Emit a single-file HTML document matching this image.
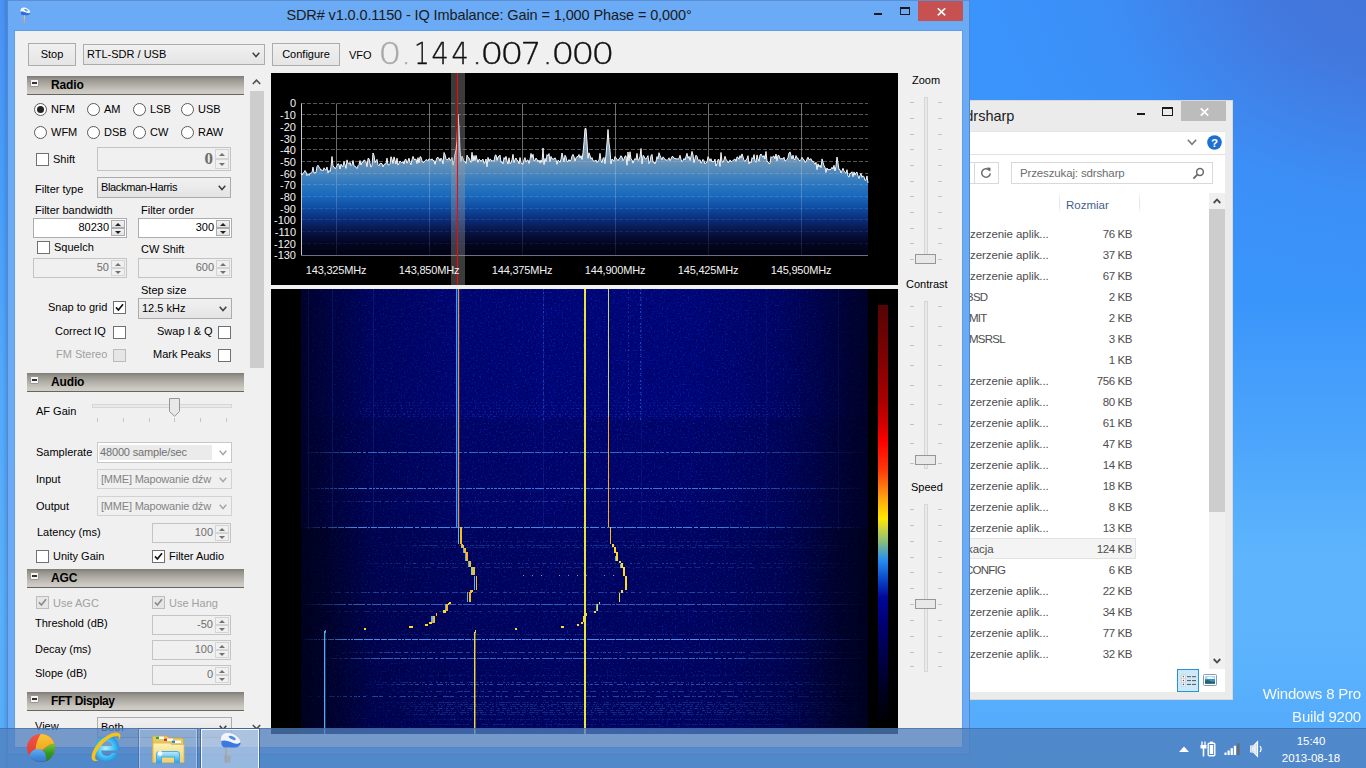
<!DOCTYPE html><html><head><meta charset="utf-8"><title>SDR#</title><style>
*{box-sizing:border-box;margin:0;padding:0}
html,body{width:1366px;height:768px;overflow:hidden}
body{position:relative;font-family:"Liberation Sans",sans-serif;font-size:11px;color:#000;
 background:
  radial-gradient(ellipse 430px 340px at 1400px -40px, rgba(68,114,214,1) 0%, rgba(67,117,219,.85) 35%, rgba(62,132,238,.35) 70%, rgba(58,150,252,0) 100%),
  linear-gradient(180deg,#3a94fb 0px,#3a95fb 300px,#4ba4fb 430px,#5eb5fd 560px,#5db4fd 640px,#57aefc 700px,#55abfc 728px,#52a6f6 768px);}
div{position:absolute}
.t{white-space:nowrap;line-height:13px;height:13px}
.g{color:#6d6d6d}
.hdr{background:linear-gradient(180deg,#7e7b76 0px,#96938d 3px,#b2afa8 9px,#cbc8c1 15px,#d0cdc6 18px);border-bottom:1px solid #676562}
.hdr b{position:absolute;left:24px;top:2px;font-size:12px;line-height:14px}
.hdr i{position:absolute;left:3px;top:3px;width:9px;height:8px;background:#f4f4f2;border:1px solid #9a9893;border-radius:1px}
.hdr i:after{content:"";position:absolute;left:1px;top:2px;width:5px;height:2px;background:#333}
.cb{width:13px;height:13px;background:#fff;border:1px solid #707070}
.cb.d{background:#e6e6e6;border-color:#bcbcbc}
.rb{width:13px;height:13px;background:#fff;border:1px solid #5a5a5a;border-radius:50%}
.rb.on:after{content:"";position:absolute;left:2px;top:2px;width:7px;height:7px;border-radius:50%;background:#222}
.btn{background:linear-gradient(180deg,#f0f0f0,#e5e5e5);border:1px solid #acacac;text-align:center;font-size:11px;line-height:20px}
.cmb{background:linear-gradient(180deg,#f1f1f1,#e4e4e4);border:1px solid #acacac;font-size:11px;line-height:19px;padding-left:3px;white-space:nowrap;overflow:hidden}
.cmb.d{background:#f0f0f0;border-color:#d2d2d2;color:#6d6d6d}
.num{background:#fff;border:1px solid #abadb3;font-size:11px;line-height:17px;text-align:right;padding-right:17px;white-space:nowrap}
.num.d{background:#f0f0f0;border-color:#c4c4c4;color:#6d6d6d}
svg{position:absolute;overflow:visible}
</style></head><body>
<div style="left:0px;top:0px;width:8px;height:768px;background:linear-gradient(90deg,rgba(0,20,90,0) 0px,rgba(0,20,90,.02) 3px,rgba(0,20,90,.14) 7px),linear-gradient(180deg,#4a92f5 0px,#489ff9 200px,#55aafc 400px,#5ab0fc 600px,#58adfb 768px)"></div>
<div style="left:940px;top:100px;width:293px;height:600px;background:#ebebeb;border:1px solid #d9d9d9"></div>
<div class="t" style="left:958px;top:107px;font-size:14.5px;line-height:18px;height:18px;color:#1c1c1c">sdrsharp</div>
<div style="left:1137px;top:113px;width:8px;height:2px;background:#1a1a1a"></div>
<div style="left:1162px;top:107px;width:11px;height:9px;border:1px solid #1a1a1a;border-top-width:2px"></div>
<div style="left:1181px;top:101px;width:45px;height:20px;background:#bcbcbc"></div>
<svg style="left:1200px;top:108px" width="9" height="8" viewBox="0 0 9 8"><path d="M0.8 0.3 L8.2 7.7 M8.2 0.3 L0.8 7.7" stroke="#fff" stroke-width="1.7" fill="none"/></svg>
<div style="left:940px;top:131px;width:285px;height:561px;background:#fff"></div>
<div style="left:940px;top:154px;width:285px;height:1px;background:#e1e1e1"></div>
<div style="left:940px;top:131px;width:285px;height:1px;background:#e6e6e6"></div>
<svg style="left:1187px;top:139px" width="10" height="7" viewBox="0 0 10 7"><path d="M0.8 0.8 L5 5.4 L9.2 0.8" stroke="#7a7a7a" stroke-width="1.6" fill="none"/></svg>
<svg style="left:1206.5px;top:134.5px" width="15" height="15" viewBox="0 0 15 15"><circle cx="7.5" cy="7.5" r="7.3" fill="#1e6fd0"/><text x="7.5" y="11.6" text-anchor="middle" font-family="Liberation Sans,sans-serif" font-weight="bold" font-size="11.5" fill="#fff">?</text></svg>
<div style="left:960px;top:162px;width:39px;height:22px;background:#fff;border:1px solid #d9d9d9"></div>
<div style="left:960px;top:162px;width:15px;height:22px;background:#fff;border:1px solid #d9d9d9"></div>
<svg style="left:980px;top:167px" width="12" height="12" viewBox="0 0 12 12"><path d="M9.6 3.6 A4.3 4.3 0 1 0 10.3 6.4" stroke="#6a6a6a" stroke-width="1.4" fill="none"/><path d="M6.6 0.6 L10.6 0.8 L10.2 4.8 Z" fill="#6a6a6a"/></svg>
<div style="left:1011px;top:162px;width:202px;height:22px;background:#fff;border:1px solid #d9d9d9"></div>
<div class="t" style="left:1020px;top:166px;font-size:11.5px;line-height:14px;height:14px;color:#6d6d6d;letter-spacing:-0.14px">Przeszukaj: sdrsharp</div>
<svg style="left:1192px;top:167px" width="13" height="13" viewBox="0 0 13 13"><circle cx="8" cy="5" r="3.4" stroke="#6a6a6a" stroke-width="1.5" fill="none"/><path d="M5.6 7.4 L1.4 11.6" stroke="#6a6a6a" stroke-width="1.9"/></svg>
<div style="left:1059px;top:192px;width:1px;height:21px;background:linear-gradient(180deg,#fff,#dfe8f5 40%,#dfe8f5 70%,#fff)"></div>
<div style="left:1139px;top:192px;width:1px;height:21px;background:linear-gradient(180deg,#fff,#dfe8f5 40%,#dfe8f5 70%,#fff)"></div>
<div class="t" style="left:1066px;top:198px;font-size:11.5px;line-height:14px;height:14px;color:#44608c">Rozmiar</div>
<div style="left:1209px;top:193px;width:16px;height:476px;background:#f0f0f0"></div>
<div style="left:1209px;top:209px;width:16px;height:303px;background:#cdcdcd"></div>
<svg style="left:1213px;top:198px" width="8" height="6" viewBox="0 0 10 7"><path d="M0.9 6 L5 1.6 L9.1 6" stroke="#4a4a4a" stroke-width="2.3" fill="none"/></svg>
<svg style="left:1213px;top:658px" width="8" height="6" viewBox="0 0 10 7"><path d="M0.9 1.0 L5 5.4 L9.1 1.0" stroke="#4a4a4a" stroke-width="2.3" fill="none"/></svg>
<div class="t" style="left:970px;top:227px;font-size:11.5px;line-height:14px;height:14px;color:#4e4e4e;letter-spacing:-0.07px;">zerzenie aplik...</div>
<div class="t" style="left:1032px;top:227px;font-size:11.5px;line-height:14px;height:14px;color:#4e4e4e;letter-spacing:-0.07px;width:100px;text-align:right;letter-spacing:-0.4px">76 KB</div>
<div class="t" style="left:970px;top:248px;font-size:11.5px;line-height:14px;height:14px;color:#4e4e4e;letter-spacing:-0.07px;">zerzenie aplik...</div>
<div class="t" style="left:1032px;top:248px;font-size:11.5px;line-height:14px;height:14px;color:#4e4e4e;letter-spacing:-0.07px;width:100px;text-align:right;letter-spacing:-0.4px">37 KB</div>
<div class="t" style="left:970px;top:269px;font-size:11.5px;line-height:14px;height:14px;color:#4e4e4e;letter-spacing:-0.07px;">zerzenie aplik...</div>
<div class="t" style="left:1032px;top:269px;font-size:11.5px;line-height:14px;height:14px;color:#4e4e4e;letter-spacing:-0.07px;width:100px;text-align:right;letter-spacing:-0.4px">67 KB</div>
<div class="t" style="left:966px;top:290px;font-size:11.5px;line-height:14px;height:14px;color:#4e4e4e;letter-spacing:-0.07px;letter-spacing:-0.75px;">BSD</div>
<div class="t" style="left:1032px;top:290px;font-size:11.5px;line-height:14px;height:14px;color:#4e4e4e;letter-spacing:-0.07px;width:100px;text-align:right;letter-spacing:-0.4px">2 KB</div>
<div class="t" style="left:969px;top:311px;font-size:11.5px;line-height:14px;height:14px;color:#4e4e4e;letter-spacing:-0.07px;letter-spacing:-0.75px;">MIT</div>
<div class="t" style="left:1032px;top:311px;font-size:11.5px;line-height:14px;height:14px;color:#4e4e4e;letter-spacing:-0.07px;width:100px;text-align:right;letter-spacing:-0.4px">2 KB</div>
<div class="t" style="left:969px;top:332px;font-size:11.5px;line-height:14px;height:14px;color:#4e4e4e;letter-spacing:-0.07px;letter-spacing:-0.75px;">MSRSL</div>
<div class="t" style="left:1032px;top:332px;font-size:11.5px;line-height:14px;height:14px;color:#4e4e4e;letter-spacing:-0.07px;width:100px;text-align:right;letter-spacing:-0.4px">3 KB</div>
<div class="t" style="left:1032px;top:353px;font-size:11.5px;line-height:14px;height:14px;color:#4e4e4e;letter-spacing:-0.07px;width:100px;text-align:right;letter-spacing:-0.4px">1 KB</div>
<div class="t" style="left:970px;top:374px;font-size:11.5px;line-height:14px;height:14px;color:#4e4e4e;letter-spacing:-0.07px;">zerzenie aplik...</div>
<div class="t" style="left:1032px;top:374px;font-size:11.5px;line-height:14px;height:14px;color:#4e4e4e;letter-spacing:-0.07px;width:100px;text-align:right;letter-spacing:-0.4px">756 KB</div>
<div class="t" style="left:970px;top:395px;font-size:11.5px;line-height:14px;height:14px;color:#4e4e4e;letter-spacing:-0.07px;">zerzenie aplik...</div>
<div class="t" style="left:1032px;top:395px;font-size:11.5px;line-height:14px;height:14px;color:#4e4e4e;letter-spacing:-0.07px;width:100px;text-align:right;letter-spacing:-0.4px">80 KB</div>
<div class="t" style="left:970px;top:416px;font-size:11.5px;line-height:14px;height:14px;color:#4e4e4e;letter-spacing:-0.07px;">zerzenie aplik...</div>
<div class="t" style="left:1032px;top:416px;font-size:11.5px;line-height:14px;height:14px;color:#4e4e4e;letter-spacing:-0.07px;width:100px;text-align:right;letter-spacing:-0.4px">61 KB</div>
<div class="t" style="left:970px;top:437px;font-size:11.5px;line-height:14px;height:14px;color:#4e4e4e;letter-spacing:-0.07px;">zerzenie aplik...</div>
<div class="t" style="left:1032px;top:437px;font-size:11.5px;line-height:14px;height:14px;color:#4e4e4e;letter-spacing:-0.07px;width:100px;text-align:right;letter-spacing:-0.4px">47 KB</div>
<div class="t" style="left:970px;top:458px;font-size:11.5px;line-height:14px;height:14px;color:#4e4e4e;letter-spacing:-0.07px;">zerzenie aplik...</div>
<div class="t" style="left:1032px;top:458px;font-size:11.5px;line-height:14px;height:14px;color:#4e4e4e;letter-spacing:-0.07px;width:100px;text-align:right;letter-spacing:-0.4px">14 KB</div>
<div class="t" style="left:970px;top:479px;font-size:11.5px;line-height:14px;height:14px;color:#4e4e4e;letter-spacing:-0.07px;">zerzenie aplik...</div>
<div class="t" style="left:1032px;top:479px;font-size:11.5px;line-height:14px;height:14px;color:#4e4e4e;letter-spacing:-0.07px;width:100px;text-align:right;letter-spacing:-0.4px">18 KB</div>
<div class="t" style="left:970px;top:500px;font-size:11.5px;line-height:14px;height:14px;color:#4e4e4e;letter-spacing:-0.07px;">zerzenie aplik...</div>
<div class="t" style="left:1032px;top:500px;font-size:11.5px;line-height:14px;height:14px;color:#4e4e4e;letter-spacing:-0.07px;width:100px;text-align:right;letter-spacing:-0.4px">8 KB</div>
<div class="t" style="left:970px;top:521px;font-size:11.5px;line-height:14px;height:14px;color:#4e4e4e;letter-spacing:-0.07px;">zerzenie aplik...</div>
<div class="t" style="left:1032px;top:521px;font-size:11.5px;line-height:14px;height:14px;color:#4e4e4e;letter-spacing:-0.07px;width:100px;text-align:right;letter-spacing:-0.4px">13 KB</div>
<div style="left:940px;top:538px;width:196px;height:21px;background:#f4f4f4;border:1px solid #e2e2e2"></div>
<div class="t" style="left:967px;top:542px;font-size:11.5px;line-height:14px;height:14px;color:#4e4e4e;letter-spacing:-0.07px;">kacja</div>
<div class="t" style="left:1032px;top:542px;font-size:11.5px;line-height:14px;height:14px;color:#4e4e4e;letter-spacing:-0.07px;width:100px;text-align:right;letter-spacing:-0.4px">124 KB</div>
<div class="t" style="left:965px;top:563px;font-size:11.5px;line-height:14px;height:14px;color:#4e4e4e;letter-spacing:-0.07px;letter-spacing:-0.75px;">CONFIG</div>
<div class="t" style="left:1032px;top:563px;font-size:11.5px;line-height:14px;height:14px;color:#4e4e4e;letter-spacing:-0.07px;width:100px;text-align:right;letter-spacing:-0.4px">6 KB</div>
<div class="t" style="left:970px;top:584px;font-size:11.5px;line-height:14px;height:14px;color:#4e4e4e;letter-spacing:-0.07px;">zerzenie aplik...</div>
<div class="t" style="left:1032px;top:584px;font-size:11.5px;line-height:14px;height:14px;color:#4e4e4e;letter-spacing:-0.07px;width:100px;text-align:right;letter-spacing:-0.4px">22 KB</div>
<div class="t" style="left:970px;top:605px;font-size:11.5px;line-height:14px;height:14px;color:#4e4e4e;letter-spacing:-0.07px;">zerzenie aplik...</div>
<div class="t" style="left:1032px;top:605px;font-size:11.5px;line-height:14px;height:14px;color:#4e4e4e;letter-spacing:-0.07px;width:100px;text-align:right;letter-spacing:-0.4px">34 KB</div>
<div class="t" style="left:970px;top:626px;font-size:11.5px;line-height:14px;height:14px;color:#4e4e4e;letter-spacing:-0.07px;">zerzenie aplik...</div>
<div class="t" style="left:1032px;top:626px;font-size:11.5px;line-height:14px;height:14px;color:#4e4e4e;letter-spacing:-0.07px;width:100px;text-align:right;letter-spacing:-0.4px">77 KB</div>
<div class="t" style="left:970px;top:647px;font-size:11.5px;line-height:14px;height:14px;color:#4e4e4e;letter-spacing:-0.07px;">zerzenie aplik...</div>
<div class="t" style="left:1032px;top:647px;font-size:11.5px;line-height:14px;height:14px;color:#4e4e4e;letter-spacing:-0.07px;width:100px;text-align:right;letter-spacing:-0.4px">32 KB</div>
<div style="left:1177px;top:669px;width:22px;height:23px;background:#cde8f7;border:1px solid #2693da"></div>
<svg style="left:1177px;top:669px" width="22" height="23" viewBox="0 0 22 23"><rect x="4.4" y="5.7" width="4" height="3.8" rx=".8" fill="#fff" stroke="#b8c0c8" stroke-width=".6"/><circle cx="6.4" cy="7.6" r=".8" fill="#2a9a30"/><rect x="10" y="7.1" width="4" height="1.1" fill="#606468"/><rect x="15" y="7.1" width="4" height="1.1" fill="#606468"/><rect x="4.4" y="9.6" width="4" height="3.8" rx=".8" fill="#fff" stroke="#b8c0c8" stroke-width=".6"/><circle cx="6.4" cy="11.5" r=".8" fill="#e82818"/><rect x="10" y="11.0" width="4" height="1.1" fill="#606468"/><rect x="15" y="11.0" width="4" height="1.1" fill="#606468"/><rect x="4.4" y="13.5" width="4" height="3.8" rx=".8" fill="#fff" stroke="#b8c0c8" stroke-width=".6"/><circle cx="6.4" cy="15.4" r=".8" fill="#2a5ae0"/><rect x="10" y="14.9" width="4" height="1.1" fill="#606468"/><rect x="15" y="14.9" width="4" height="1.1" fill="#606468"/></svg>
<svg style="left:1203px;top:674px" width="14" height="12" viewBox="0 0 14 12"><rect x="0.5" y="0.5" width="13" height="11" rx="1" fill="#fff" stroke="#8a98b0"/><rect x="2" y="2" width="10" height="7.6" fill="#3a8ad8"/><rect x="2" y="2" width="10" height="3" fill="#a8d8f8"/><path d="M4 3.5 Q7 2 11 4 L11 5 L5 5 Z" fill="#fff" fill-opacity=".85"/><path d="M2 9.6 L2 6.5 Q5 5 8 7.5 Q10 8.2 12 7.2 L12 9.6 Z" fill="#2a6a3a"/><path d="M2 9.6 L2 8.6 Q6 8 12 9 L12 9.6 Z" fill="#1a58a8"/></svg>
<div style="left:7px;top:0px;width:963px;height:755px;background:#6babf5;border:1px solid #5288cc;border-top-color:#5a8fd2"></div>
<div style="left:15px;top:31px;width:947px;height:716px;background:#f0f0f0"></div>
<div style="left:14px;top:30px;width:949px;height:718px;border:1px solid #5f9ce6"></div>
<div class="t" style="left:8px;top:6px;width:962px;text-align:center;font-size:14.5px;line-height:18px;height:18px;color:#1a1a1a;letter-spacing:-0.11px">SDR# v1.0.0.1150 - IQ Imbalance: Gain = 1,000 Phase = 0,000°</div>
<svg style="left:20px;top:7px" width="11" height="16.5" viewBox="0 0 22 31" preserveAspectRatio="none"><path d="M1 7 C1 2 5 0.5 9 1 C14 1.6 19 5 20.5 9.5 C21 12 19 14.5 15 14.5 L7 14.5 C3 14.5 1 12 1 7 Z" fill="#f4f7fc"/><path d="M8.5 4.5 C10 3 13.5 4 15.5 6.5 C16.3 7.8 15 8.6 13.5 8 C11.5 7 9.5 6.6 8.5 4.5 Z" fill="#5a96ea"/><path d="M1.2 9 C4 7.5 9 9 13 11 C16 12.3 19 12 20.6 10 C21 13 18.5 15.5 14.5 15.5 L5.5 15.5 C2.5 15.5 1.2 13 1.2 9 Z" fill="#2f6fdc"/><rect x="4.4" y="15.5" width="2" height="14" fill="#a8acb2"/><rect x="8" y="15.5" width="2" height="14" fill="#c0c4ca"/><path d="M3.6 23 H10.6 V30 H3.6 Z" fill="#a0a4aa" fill-opacity=".6"/></svg>
<div style="left:874px;top:13px;width:8px;height:2px;background:#1a1a1a"></div>
<div style="left:900px;top:7px;width:10px;height:8px;border:1px solid #1a1a1a;border-top-width:2px"></div>
<div style="left:918px;top:1px;width:45px;height:20px;background:#c75050"></div>
<svg style="left:937px;top:8px" width="9" height="7.6" viewBox="0 0 9 8" preserveAspectRatio="none"><path d="M0.8 0.3 L8.2 7.7 M8.2 0.3 L0.8 7.7" stroke="#fff" stroke-width="1.7" fill="none"/></svg>
<div class="btn" style="left:28px;top:43px;width:48px;height:23px;">Stop</div>
<div class="cmb" style="left:83px;top:44px;width:182px;height:21px;">RTL-SDR / USB</div>
<div class="btn" style="left:272px;top:43px;width:68px;height:23px;">Configure</div>
<div class="t" style="left:349px;top:49px;">VFO</div>
<svg style="left:252px;top:52px" width="8" height="6" viewBox="0 0 8 6"><path d="M0.7 0.8 L4 4.6 L7.3 0.8" stroke="#404040" stroke-width="1.5" fill="none"/></svg>
<div class="t" style="left:379px;top:35px;width:240px;font-family:'DejaVu Sans Light','DejaVu Sans',sans-serif;font-weight:200;font-size:30px;line-height:38px;height:38px;-webkit-text-stroke:0.35px currentColor"><span style="position:absolute;left:-4.1px;top:0;width:30px;text-align:center;color:#a8a8a8;transform:scaleX(1.22)">0</span><span style="position:absolute;left:12.0px;top:0;width:30px;text-align:center;color:#a8a8a8;transform:scaleX(1.0)">.</span><span style="position:absolute;left:28.3px;top:0;width:30px;text-align:center;color:#111;transform:scaleX(0.8)">1</span><span style="position:absolute;left:46.2px;top:0;width:30px;text-align:center;color:#111;transform:scaleX(0.9)">4</span><span style="position:absolute;left:66.4px;top:0;width:30px;text-align:center;color:#111;transform:scaleX(0.9)">4</span><span style="position:absolute;left:83.1px;top:0;width:30px;text-align:center;color:#111;transform:scaleX(1.0)">.</span><span style="position:absolute;left:97.7px;top:0;width:30px;text-align:center;color:#111;transform:scaleX(1.22)">0</span><span style="position:absolute;left:117.6px;top:0;width:30px;text-align:center;color:#111;transform:scaleX(1.22)">0</span><span style="position:absolute;left:136.6px;top:0;width:30px;text-align:center;color:#111;transform:scaleX(1.1)">7</span><span style="position:absolute;left:153.5px;top:0;width:30px;text-align:center;color:#111;transform:scaleX(1.0)">.</span><span style="position:absolute;left:169.1px;top:0;width:30px;text-align:center;color:#111;transform:scaleX(1.22)">0</span><span style="position:absolute;left:188.9px;top:0;width:30px;text-align:center;color:#111;transform:scaleX(1.22)">0</span><span style="position:absolute;left:209.1px;top:0;width:30px;text-align:center;color:#111;transform:scaleX(1.22)">0</span></div>
<div class="hdr" style="left:27px;top:76px;width:217px;height:19px"><i></i><b style="letter-spacing:-0.15px">Radio</b></div>
<div class="hdr" style="left:27px;top:373px;width:217px;height:19px"><i></i><b style="letter-spacing:-0.15px">Audio</b></div>
<div class="hdr" style="left:27px;top:569px;width:217px;height:19px"><i></i><b style="letter-spacing:-0.15px">AGC</b></div>
<div class="hdr" style="left:27px;top:692px;width:217px;height:19px"><i></i><b style="letter-spacing:-0.4px">FFT Display</b></div>
<div style="left:248px;top:75px;width:17px;height:660px;background:#f0f0f0"></div>
<div style="left:250px;top:91px;width:14px;height:277px;background:#cdcdcd"></div>
<svg style="left:252px;top:79px" width="9" height="6" viewBox="0 0 9 6"><path d="M0.8 5 L4.5 1.2 L8.2 5" stroke="#505050" stroke-width="1.6" fill="none"/></svg>
<svg style="left:252px;top:724px" width="9" height="6" viewBox="0 0 9 6"><path d="M0.8 1 L4.5 4.8 L8.2 1" stroke="#505050" stroke-width="1.6" fill="none"/></svg>
<div class="rb on" style="left:34px;top:103px"></div>
<div class="t" style="left:51px;top:103px;">NFM</div>
<div class="rb" style="left:34px;top:126px"></div>
<div class="t" style="left:51px;top:126px;">WFM</div>
<div class="rb" style="left:87px;top:103px"></div>
<div class="t" style="left:104px;top:103px;">AM</div>
<div class="rb" style="left:87px;top:126px"></div>
<div class="t" style="left:104px;top:126px;">DSB</div>
<div class="rb" style="left:133px;top:103px"></div>
<div class="t" style="left:150px;top:103px;">LSB</div>
<div class="rb" style="left:133px;top:126px"></div>
<div class="t" style="left:150px;top:126px;">CW</div>
<div class="rb" style="left:181px;top:103px"></div>
<div class="t" style="left:198px;top:103px;">USB</div>
<div class="rb" style="left:181px;top:126px"></div>
<div class="t" style="left:198px;top:126px;">RAW</div>
<div class="cb" style="left:36px;top:153px"></div>
<div class="t" style="left:53px;top:153px;">Shift</div>
<div class="num d" style="left:97px;top:147px;width:134px;height:24px;line-height:22px;padding-right:17px"><span style="font-family:'Liberation Serif',serif;font-weight:bold;font-size:17px;line-height:22px">0</span></div>
<div style="left:215px;top:149px;width:14px;height:10px;background:#f0f0f0;border:1px solid #d4d4d4"></div>
<div style="left:215px;top:159px;width:14px;height:10px;background:#f0f0f0;border:1px solid #d4d4d4"></div>
<svg style="left:219px;top:152.5px" width="6" height="3" viewBox="0 0 6 3"><path d="M0 3 L3 0 L6 3 Z" fill="#727272"/></svg>
<svg style="left:219px;top:162.5px" width="6" height="3" viewBox="0 0 6 3"><path d="M0 0 L3 3 L6 0 Z" fill="#727272"/></svg>
<div class="t" style="left:35px;top:183px;">Filter type</div>
<div class="cmb" style="left:97px;top:177px;width:134px;height:21px;line-height:19px;letter-spacing:-0.35px">Blackman-Harris</div>
<svg style="left:218px;top:185px" width="8" height="6" viewBox="0 0 8 6"><path d="M0.7 0.8 L4 4.6 L7.3 0.8" stroke="#404040" stroke-width="1.5" fill="none"/></svg>
<div class="t" style="left:35px;top:204px;">Filter bandwidth</div>
<div class="t" style="left:141px;top:204px;">Filter order</div>
<div class="num" style="left:33px;top:218px;width:94px;height:20px;">80230</div>
<div style="left:111px;top:220px;width:14px;height:8px;background:linear-gradient(180deg,#f2f2f2,#e3e3e3);border:1px solid #acacac"></div>
<div style="left:111px;top:228px;width:14px;height:8px;background:linear-gradient(180deg,#f2f2f2,#e3e3e3);border:1px solid #acacac"></div>
<svg style="left:115px;top:222.5px" width="6" height="3" viewBox="0 0 6 3"><path d="M0 3 L3 0 L6 3 Z" fill="#202020"/></svg>
<svg style="left:115px;top:230.5px" width="6" height="3" viewBox="0 0 6 3"><path d="M0 0 L3 3 L6 0 Z" fill="#202020"/></svg>
<div class="num" style="left:138px;top:218px;width:94px;height:20px;">300</div>
<div style="left:216px;top:220px;width:14px;height:8px;background:linear-gradient(180deg,#f2f2f2,#e3e3e3);border:1px solid #acacac"></div>
<div style="left:216px;top:228px;width:14px;height:8px;background:linear-gradient(180deg,#f2f2f2,#e3e3e3);border:1px solid #acacac"></div>
<svg style="left:220px;top:222.5px" width="6" height="3" viewBox="0 0 6 3"><path d="M0 3 L3 0 L6 3 Z" fill="#202020"/></svg>
<svg style="left:220px;top:230.5px" width="6" height="3" viewBox="0 0 6 3"><path d="M0 0 L3 3 L6 0 Z" fill="#202020"/></svg>
<div class="cb" style="left:37px;top:241px"></div>
<div class="t" style="left:54px;top:241px;">Squelch</div>
<div class="t" style="left:141px;top:243px;">CW Shift</div>
<div class="num d" style="left:33px;top:258px;width:94px;height:20px;">50</div>
<div style="left:111px;top:260px;width:14px;height:8px;background:#f0f0f0;border:1px solid #d4d4d4"></div>
<div style="left:111px;top:268px;width:14px;height:8px;background:#f0f0f0;border:1px solid #d4d4d4"></div>
<svg style="left:115px;top:262.5px" width="6" height="3" viewBox="0 0 6 3"><path d="M0 3 L3 0 L6 3 Z" fill="#727272"/></svg>
<svg style="left:115px;top:270.5px" width="6" height="3" viewBox="0 0 6 3"><path d="M0 0 L3 3 L6 0 Z" fill="#727272"/></svg>
<div class="num d" style="left:138px;top:258px;width:94px;height:20px;">600</div>
<div style="left:216px;top:260px;width:14px;height:8px;background:#f0f0f0;border:1px solid #d4d4d4"></div>
<div style="left:216px;top:268px;width:14px;height:8px;background:#f0f0f0;border:1px solid #d4d4d4"></div>
<svg style="left:220px;top:262.5px" width="6" height="3" viewBox="0 0 6 3"><path d="M0 3 L3 0 L6 3 Z" fill="#727272"/></svg>
<svg style="left:220px;top:270.5px" width="6" height="3" viewBox="0 0 6 3"><path d="M0 0 L3 3 L6 0 Z" fill="#727272"/></svg>
<div class="t" style="left:141px;top:284px;">Step size</div>
<div class="t" style="left:48px;top:301px;">Snap to grid</div>
<div class="cb" style="left:113px;top:301px"></div>
<svg style="left:115px;top:303px" width="9" height="9" viewBox="0 0 9 9"><path d="M1 4.4 L3.4 7 L8 1.2" stroke="#111" stroke-width="1.6" fill="none"/></svg>
<div class="cmb" style="left:138px;top:298px;width:94px;height:21px;line-height:19px;">12.5 kHz</div>
<svg style="left:219px;top:306px" width="8" height="6" viewBox="0 0 8 6"><path d="M0.7 0.8 L4 4.6 L7.3 0.8" stroke="#404040" stroke-width="1.5" fill="none"/></svg>
<div class="t" style="left:55px;top:325px;">Correct IQ</div>
<div class="cb" style="left:113px;top:326px"></div>
<div class="t" style="left:157px;top:325px;">Swap I &amp; Q</div>
<div class="cb" style="left:218px;top:326px"></div>
<div class="t g" style="left:56px;top:348px;color:#a0a0a0">FM Stereo</div>
<div class="cb d" style="left:113px;top:349px"></div>
<div class="t" style="left:153px;top:348px;">Mark Peaks</div>
<div class="cb" style="left:218px;top:349px"></div>
<div class="t" style="left:36px;top:405px;">AF Gain</div>
<div style="left:92px;top:404px;width:140px;height:4px;background:#e7eaea;border:1px solid #d6d6d6"></div>
<div style="left:97px;top:418px;width:1px;height:4px;background:#c4c4c4"></div>
<div style="left:123px;top:418px;width:1px;height:4px;background:#c4c4c4"></div>
<div style="left:149px;top:418px;width:1px;height:4px;background:#c4c4c4"></div>
<div style="left:174px;top:418px;width:1px;height:4px;background:#c4c4c4"></div>
<div style="left:200px;top:418px;width:1px;height:4px;background:#c4c4c4"></div>
<div style="left:226px;top:418px;width:1px;height:4px;background:#c4c4c4"></div>
<svg style="left:169px;top:398px" width="11" height="19" viewBox="0 0 11 19"><path d="M0.5 0.5 H10.5 V13.5 L5.5 18.3 L0.5 13.5 Z" fill="#e8e8e8" stroke="#969696"/></svg>
<div class="t" style="left:36px;top:446px;">Samplerate</div>
<div style="left:97px;top:442px;width:135px;height:21px;background:#fff;border:1px solid #c8c8c8"></div>
<div style="left:99px;top:445px;width:113px;height:15px;background:#ebebeb"></div>
<div class="t g" style="left:100px;top:446px;color:#707070;letter-spacing:-0.15px">48000 sample/sec</div>
<svg style="left:219px;top:450px" width="8" height="6" viewBox="0 0 8 6"><path d="M0.7 0.8 L4 4.6 L7.3 0.8" stroke="#a8a8a8" stroke-width="1.5" fill="none"/></svg>
<div class="t" style="left:36px;top:473px;">Input</div>
<div class="cmb d" style="left:97px;top:469px;width:135px;height:20px;line-height:18px;color:#838383;letter-spacing:-0.2px;line-height:19px">[MME] Mapowanie dźw</div>
<svg style="left:219px;top:477px" width="8" height="6" viewBox="0 0 8 6"><path d="M0.7 0.8 L4 4.6 L7.3 0.8" stroke="#a8a8a8" stroke-width="1.5" fill="none"/></svg>
<div class="t" style="left:36px;top:500px;">Output</div>
<div class="cmb d" style="left:97px;top:496px;width:135px;height:20px;line-height:18px;color:#838383;letter-spacing:-0.2px;line-height:19px">[MME] Mapowanie dźw</div>
<svg style="left:219px;top:504px" width="8" height="6" viewBox="0 0 8 6"><path d="M0.7 0.8 L4 4.6 L7.3 0.8" stroke="#a8a8a8" stroke-width="1.5" fill="none"/></svg>
<div class="t" style="left:37px;top:526px;">Latency (ms)</div>
<div class="num d" style="left:152px;top:523px;width:79px;height:20px;">100</div>
<div style="left:215px;top:525px;width:14px;height:8px;background:#f0f0f0;border:1px solid #d4d4d4"></div>
<div style="left:215px;top:533px;width:14px;height:8px;background:#f0f0f0;border:1px solid #d4d4d4"></div>
<svg style="left:219px;top:527.5px" width="6" height="3" viewBox="0 0 6 3"><path d="M0 3 L3 0 L6 3 Z" fill="#727272"/></svg>
<svg style="left:219px;top:535.5px" width="6" height="3" viewBox="0 0 6 3"><path d="M0 0 L3 3 L6 0 Z" fill="#727272"/></svg>
<div class="cb" style="left:36px;top:550px"></div>
<div class="t" style="left:53px;top:550px;">Unity Gain</div>
<div class="cb" style="left:152px;top:550px"></div>
<svg style="left:154px;top:552px" width="9" height="9" viewBox="0 0 9 9"><path d="M1 4.4 L3.4 7 L8 1.2" stroke="#111" stroke-width="1.6" fill="none"/></svg>
<div class="t" style="left:169px;top:550px;">Filter Audio</div>
<div class="cb d" style="left:36px;top:596px"></div>
<svg style="left:38px;top:598px" width="9" height="9" viewBox="0 0 9 9"><path d="M1 4.4 L3.4 7 L8 1.2" stroke="#8c8c8c" stroke-width="1.6" fill="none"/></svg>
<div class="t" style="left:53px;top:597px;color:#a0a0a0">Use AGC</div>
<div class="cb d" style="left:152px;top:596px"></div>
<svg style="left:154px;top:598px" width="9" height="9" viewBox="0 0 9 9"><path d="M1 4.4 L3.4 7 L8 1.2" stroke="#8c8c8c" stroke-width="1.6" fill="none"/></svg>
<div class="t" style="left:169px;top:597px;color:#a0a0a0">Use Hang</div>
<div class="t" style="left:35px;top:617px;">Threshold (dB)</div>
<div class="num d" style="left:152px;top:615px;width:79px;height:20px;">-50</div>
<div style="left:215px;top:617px;width:14px;height:8px;background:#f0f0f0;border:1px solid #d4d4d4"></div>
<div style="left:215px;top:625px;width:14px;height:8px;background:#f0f0f0;border:1px solid #d4d4d4"></div>
<svg style="left:219px;top:619.5px" width="6" height="3" viewBox="0 0 6 3"><path d="M0 3 L3 0 L6 3 Z" fill="#727272"/></svg>
<svg style="left:219px;top:627.5px" width="6" height="3" viewBox="0 0 6 3"><path d="M0 0 L3 3 L6 0 Z" fill="#727272"/></svg>
<div class="t" style="left:35px;top:643px;">Decay (ms)</div>
<div class="num d" style="left:152px;top:640px;width:79px;height:20px;">100</div>
<div style="left:215px;top:642px;width:14px;height:8px;background:#f0f0f0;border:1px solid #d4d4d4"></div>
<div style="left:215px;top:650px;width:14px;height:8px;background:#f0f0f0;border:1px solid #d4d4d4"></div>
<svg style="left:219px;top:644.5px" width="6" height="3" viewBox="0 0 6 3"><path d="M0 3 L3 0 L6 3 Z" fill="#727272"/></svg>
<svg style="left:219px;top:652.5px" width="6" height="3" viewBox="0 0 6 3"><path d="M0 0 L3 3 L6 0 Z" fill="#727272"/></svg>
<div class="t" style="left:35px;top:667px;">Slope (dB)</div>
<div class="num d" style="left:152px;top:665px;width:79px;height:20px;">0</div>
<div style="left:215px;top:667px;width:14px;height:8px;background:#f0f0f0;border:1px solid #d4d4d4"></div>
<div style="left:215px;top:675px;width:14px;height:8px;background:#f0f0f0;border:1px solid #d4d4d4"></div>
<svg style="left:219px;top:669.5px" width="6" height="3" viewBox="0 0 6 3"><path d="M0 3 L3 0 L6 3 Z" fill="#727272"/></svg>
<svg style="left:219px;top:677.5px" width="6" height="3" viewBox="0 0 6 3"><path d="M0 0 L3 3 L6 0 Z" fill="#727272"/></svg>
<div class="t" style="left:35px;top:720px;">View</div>
<div class="cmb" style="left:97px;top:717px;width:135px;height:21px;line-height:19px;">Both</div>
<svg style="left:219px;top:725px" width="8" height="6" viewBox="0 0 8 6"><path d="M0.7 0.8 L4 4.6 L7.3 0.8" stroke="#404040" stroke-width="1.5" fill="none"/></svg>
<div style="left:271px;top:73px;width:627px;height:212px;background:#000"></div>
<svg style="left:0;top:0" width="1366" height="300" viewBox="0 0 1366 300"><defs><linearGradient id="sg" gradientUnits="userSpaceOnUse" x1="0" y1="103" x2="0" y2="256"><stop offset="0" stop-color="#c9d3dc"/><stop offset="0.31" stop-color="#7a9cb8"/><stop offset="0.37" stop-color="#7096b6"/><stop offset="0.45" stop-color="#4f88bb"/><stop offset="0.53" stop-color="#2c77bf"/><stop offset="0.61" stop-color="#1967bc"/><stop offset="0.69" stop-color="#0e4a9e"/><stop offset="0.765" stop-color="#0a2b76"/><stop offset="0.84" stop-color="#071446"/><stop offset="0.915" stop-color="#030622"/><stop offset="1" stop-color="#020210"/></linearGradient><linearGradient id="vg" gradientUnits="userSpaceOnUse" x1="0" y1="150" x2="0" y2="256"><stop offset="0" stop-color="#c0d4f0" stop-opacity=".36"/><stop offset=".5" stop-color="#b0c8f0" stop-opacity=".26"/><stop offset="1" stop-color="#a0b8f0" stop-opacity=".1"/></linearGradient></defs><polygon points="301,255.5 301,173.3 302,175.1 303,173.2 304,172.5 305,170.5 306,172.0 307,175.6 308,174.1 309,175.4 310,173.3 311,173.2 312,172.4 313,167.1 314,173.0 315,172.8 316,172.5 317,166.4 318,165.2 319,167.1 320,168.4 321,170.5 322,169.7 323,170.9 324,167.8 325,169.7 326,170.0 327,167.1 328,172.9 329,170.4 330,171.6 331,166.7 332,156.5 333,166.2 334,166.8 335,168.7 336,167.8 337,165.6 338,163.7 339,164.4 340,169.0 341,164.1 342,166.0 343,166.6 344,161.4 345,164.6 346,168.4 347,159.9 348,163.2 349,164.2 350,162.4 351,165.6 352,164.5 353,160.5 354,166.0 355,166.3 356,167.1 357,168.5 358,165.7 359,164.6 360,160.5 361,165.0 362,162.3 363,162.3 364,160.0 365,160.4 366,161.6 367,166.6 368,158.4 369,158.6 370,163.2 371,167.1 372,165.2 373,153 374,155.4 375,162.7 376,160.8 377,159.4 378,164.8 379,165.9 380,163.4 381,163.3 382,163.7 383,166.8 384,164.6 385,163.9 386,163.8 387,158.1 388,164.8 389,164.9 390,163.7 391,156.7 392,159.2 393,163.5 394,156.9 395,160.3 396,164.0 397,158.2 398,165.1 399,163.3 400,161.0 401,161.9 402,162.9 403,161.5 404,164.0 405,159.5 406,159.4 407,163.2 408,161.0 409,158.2 410,162.6 411,164.6 412,159.7 413,156.4 414,159.2 415,159.5 416,159.1 417,163.6 418,157.6 419,162.8 420,156.7 421,157.1 422,160.9 423,162.7 424,162.2 425,160.7 426,159.9 427,159.7 428,160.8 429,158.8 430,159.2 431,160.2 432,158.8 433,160.6 434,160.4 435,164.3 436,160.3 437,157.7 438,157.5 439,158.4 440,161.1 441,158.1 442,159.6 443,163.8 444,152.5 445,154.7 446,158.8 447,159.8 448,159.5 449,157.7 450,160.4 451,159.8 452,157.5 453,165.2 454,160.7 455,154 456,150 457,141 458,114 459,127 460,150 461,161.3 462,156.2 463,158.4 464,161.5 465,161.7 466,163.4 467,155.1 468,157.5 469,157.9 470,160.6 471,162.3 472,152.3 473,161.1 474,155.5 475,160.5 476,155.3 477,159.1 478,162.4 479,159.3 480,159.8 481,161.5 482,160.0 483,159.1 484,163.4 485,162.8 486,159.0 487,166.7 488,157.4 489,161.5 490,159.0 491,159.7 492,161.3 493,160.3 494,161.3 495,155.6 496,154.8 497,160.4 498,157.0 499,156.3 500,155.0 501,162.2 502,161.9 503,163.9 504,157.6 505,159.3 506,156.4 507,161.1 508,164.1 509,157.8 510,163.5 511,162.8 512,159.6 513,154.3 514,162.6 515,159.8 516,158.0 517,160.4 518,160.8 519,163.8 520,157.5 521,162.3 522,164.0 523,164.2 524,159.8 525,157.6 526,162.1 527,160.3 528,160.0 529,163.5 530,159.5 531,153.4 532,157.6 533,154.3 534,161.0 535,160.6 536,158.1 537,159.3 538,161.8 539,160.1 540,163.2 541,159.9 542,162.4 543,148 544,164.5 545,158.4 546,161.7 547,154.7 548,155.8 549,153.6 550,161.5 551,156.4 552,158.9 553,158.8 554,159.2 555,157.8 556,159.8 557,164.3 558,160.2 559,160.9 560,162.3 561,159.2 562,153 563,157.3 564,161.9 565,155.2 566,157.0 567,161.6 568,161.7 569,159.6 570,161.4 571,159.9 572,156.1 573,154.4 574,156.7 575,161.2 576,157.9 577,156.5 578,156.6 579,154.5 580,158.0 581,155.7 582,159.5 583,152.7 584,142 585,128.5 586,128.5 587,142 588,158.3 589,152.8 590,155.6 591,159.1 592,157.6 593,160.7 594,161.1 595,160.9 596,160.0 597,162.5 598,161.1 599,160.3 600,153.3 601,160.3 602,162.5 603,158.4 604,157.4 605,163.7 606,154.6 607,143 608,129.5 609,143 610,151 611,163.9 612,159.0 613,160.1 614,161.2 615,156.5 616,158.0 617,159.2 618,160.8 619,158.7 620,158.0 621,155.7 622,157.1 623,160.7 624,159.1 625,156.2 626,155.8 627,165.2 628,152 629,160.8 630,151.8 631,159.1 632,159.8 633,163.2 634,160.3 635,158.5 636,159.8 637,153.4 638,160.4 639,159.6 640,156.7 641,148.5 642,163.8 643,155.4 644,156.2 645,158.9 646,159.0 647,157.4 648,155.6 649,163.7 650,162.0 651,155.7 652,154.4 653,162.4 654,161.7 655,163.9 656,161.5 657,156.6 658,158.9 659,152.7 660,155.6 661,157.9 662,159.8 663,156.8 664,157.9 665,159.7 666,159.7 667,160.5 668,159.4 669,157.8 670,160.6 671,159.0 672,156.5 673,156.6 674,158.3 675,158.3 676,159.0 677,158.7 678,159.2 679,158.4 680,155.3 681,159.4 682,161.7 683,160.4 684,158.5 685,160.0 686,156.4 687,153.3 688,158.2 689,156.3 690,160.5 691,156.2 692,151.4 693,155.0 694,162.6 695,158.5 696,155.2 697,156.4 698,160.0 699,160.5 700,159.7 701,163.2 702,161.6 703,159.4 704,160.8 705,163.8 706,162.5 707,162.4 708,156.7 709,158.4 710,161.1 711,158.7 712,162.0 713,161.3 714,162.0 715,159.1 716,166.1 717,163.7 718,159.4 719,159.6 720,166.4 721,152.5 722,161.7 723,162.4 724,159.9 725,156.3 726,159.5 727,160.4 728,162.6 729,162.0 730,159.9 731,161.8 732,161.3 733,160.3 734,159.8 735,158.9 736,161.3 737,156.9 738,157.4 739,159.2 740,155.6 741,157.8 742,153.9 743,156.9 744,160.7 745,161.3 746,159.7 747,159.0 748,155.7 749,163.9 750,161.6 751,162.9 752,157.7 753,158.8 754,154.6 755,161.0 756,162.3 757,154.9 758,158.8 759,161.2 760,155.1 761,154.0 762,155.9 763,157.3 764,155.5 765,159.0 766,151.5 767,161.4 768,161.7 769,163.9 770,163.4 771,156.6 772,157.7 773,156.4 774,156.1 775,158.8 776,154 777,160.8 778,155.4 779,155.5 780,158.8 781,158.8 782,158.5 783,159.1 784,157.3 785,161.0 786,160.6 787,159.3 788,157.6 789,153 790,151.9 791,155.6 792,158.9 793,155.2 794,159.2 795,159.7 796,155.6 797,158.0 798,158.2 799,160.3 800,160.8 801,159.4 802,157.3 803,159.1 804,159.8 805,162.3 806,161.7 807,159.1 808,157.2 809,159.8 810,159.4 811,158.6 812,161.4 813,161.0 814,162.8 815,164.4 816,162.3 817,169.6 818,163.8 819,167.0 820,165.1 821,167.7 822,158.9 823,162.2 824,165.6 825,167.3 826,172.4 827,168.0 828,170.1 829,169.3 830,169.9 831,169.0 832,167.3 833,169.1 834,165.3 835,171.0 836,166.2 837,157 838,163 839,169.6 840,169.7 841,173.0 842,170.7 843,168.3 844,171.0 845,172.5 846,173.3 847,169.7 848,176.2 849,177.1 850,173.1 851,173.3 852,171.7 853,176.7 854,171.9 855,175.2 856,172.8 857,172.1 858,176.0 859,178.5 860,175.4 861,173.4 862,177.3 863,175.8 864,176.8 865,180.4 866,180.2 867,175.9 868,183.0 868,255.5" fill="url(#sg)"/><clipPath id="ca"><polygon points="301,101.5 301,173.3 302,175.1 303,173.2 304,172.5 305,170.5 306,172.0 307,175.6 308,174.1 309,175.4 310,173.3 311,173.2 312,172.4 313,167.1 314,173.0 315,172.8 316,172.5 317,166.4 318,165.2 319,167.1 320,168.4 321,170.5 322,169.7 323,170.9 324,167.8 325,169.7 326,170.0 327,167.1 328,172.9 329,170.4 330,171.6 331,166.7 332,156.5 333,166.2 334,166.8 335,168.7 336,167.8 337,165.6 338,163.7 339,164.4 340,169.0 341,164.1 342,166.0 343,166.6 344,161.4 345,164.6 346,168.4 347,159.9 348,163.2 349,164.2 350,162.4 351,165.6 352,164.5 353,160.5 354,166.0 355,166.3 356,167.1 357,168.5 358,165.7 359,164.6 360,160.5 361,165.0 362,162.3 363,162.3 364,160.0 365,160.4 366,161.6 367,166.6 368,158.4 369,158.6 370,163.2 371,167.1 372,165.2 373,153 374,155.4 375,162.7 376,160.8 377,159.4 378,164.8 379,165.9 380,163.4 381,163.3 382,163.7 383,166.8 384,164.6 385,163.9 386,163.8 387,158.1 388,164.8 389,164.9 390,163.7 391,156.7 392,159.2 393,163.5 394,156.9 395,160.3 396,164.0 397,158.2 398,165.1 399,163.3 400,161.0 401,161.9 402,162.9 403,161.5 404,164.0 405,159.5 406,159.4 407,163.2 408,161.0 409,158.2 410,162.6 411,164.6 412,159.7 413,156.4 414,159.2 415,159.5 416,159.1 417,163.6 418,157.6 419,162.8 420,156.7 421,157.1 422,160.9 423,162.7 424,162.2 425,160.7 426,159.9 427,159.7 428,160.8 429,158.8 430,159.2 431,160.2 432,158.8 433,160.6 434,160.4 435,164.3 436,160.3 437,157.7 438,157.5 439,158.4 440,161.1 441,158.1 442,159.6 443,163.8 444,152.5 445,154.7 446,158.8 447,159.8 448,159.5 449,157.7 450,160.4 451,159.8 452,157.5 453,165.2 454,160.7 455,154 456,150 457,141 458,114 459,127 460,150 461,161.3 462,156.2 463,158.4 464,161.5 465,161.7 466,163.4 467,155.1 468,157.5 469,157.9 470,160.6 471,162.3 472,152.3 473,161.1 474,155.5 475,160.5 476,155.3 477,159.1 478,162.4 479,159.3 480,159.8 481,161.5 482,160.0 483,159.1 484,163.4 485,162.8 486,159.0 487,166.7 488,157.4 489,161.5 490,159.0 491,159.7 492,161.3 493,160.3 494,161.3 495,155.6 496,154.8 497,160.4 498,157.0 499,156.3 500,155.0 501,162.2 502,161.9 503,163.9 504,157.6 505,159.3 506,156.4 507,161.1 508,164.1 509,157.8 510,163.5 511,162.8 512,159.6 513,154.3 514,162.6 515,159.8 516,158.0 517,160.4 518,160.8 519,163.8 520,157.5 521,162.3 522,164.0 523,164.2 524,159.8 525,157.6 526,162.1 527,160.3 528,160.0 529,163.5 530,159.5 531,153.4 532,157.6 533,154.3 534,161.0 535,160.6 536,158.1 537,159.3 538,161.8 539,160.1 540,163.2 541,159.9 542,162.4 543,148 544,164.5 545,158.4 546,161.7 547,154.7 548,155.8 549,153.6 550,161.5 551,156.4 552,158.9 553,158.8 554,159.2 555,157.8 556,159.8 557,164.3 558,160.2 559,160.9 560,162.3 561,159.2 562,153 563,157.3 564,161.9 565,155.2 566,157.0 567,161.6 568,161.7 569,159.6 570,161.4 571,159.9 572,156.1 573,154.4 574,156.7 575,161.2 576,157.9 577,156.5 578,156.6 579,154.5 580,158.0 581,155.7 582,159.5 583,152.7 584,142 585,128.5 586,128.5 587,142 588,158.3 589,152.8 590,155.6 591,159.1 592,157.6 593,160.7 594,161.1 595,160.9 596,160.0 597,162.5 598,161.1 599,160.3 600,153.3 601,160.3 602,162.5 603,158.4 604,157.4 605,163.7 606,154.6 607,143 608,129.5 609,143 610,151 611,163.9 612,159.0 613,160.1 614,161.2 615,156.5 616,158.0 617,159.2 618,160.8 619,158.7 620,158.0 621,155.7 622,157.1 623,160.7 624,159.1 625,156.2 626,155.8 627,165.2 628,152 629,160.8 630,151.8 631,159.1 632,159.8 633,163.2 634,160.3 635,158.5 636,159.8 637,153.4 638,160.4 639,159.6 640,156.7 641,148.5 642,163.8 643,155.4 644,156.2 645,158.9 646,159.0 647,157.4 648,155.6 649,163.7 650,162.0 651,155.7 652,154.4 653,162.4 654,161.7 655,163.9 656,161.5 657,156.6 658,158.9 659,152.7 660,155.6 661,157.9 662,159.8 663,156.8 664,157.9 665,159.7 666,159.7 667,160.5 668,159.4 669,157.8 670,160.6 671,159.0 672,156.5 673,156.6 674,158.3 675,158.3 676,159.0 677,158.7 678,159.2 679,158.4 680,155.3 681,159.4 682,161.7 683,160.4 684,158.5 685,160.0 686,156.4 687,153.3 688,158.2 689,156.3 690,160.5 691,156.2 692,151.4 693,155.0 694,162.6 695,158.5 696,155.2 697,156.4 698,160.0 699,160.5 700,159.7 701,163.2 702,161.6 703,159.4 704,160.8 705,163.8 706,162.5 707,162.4 708,156.7 709,158.4 710,161.1 711,158.7 712,162.0 713,161.3 714,162.0 715,159.1 716,166.1 717,163.7 718,159.4 719,159.6 720,166.4 721,152.5 722,161.7 723,162.4 724,159.9 725,156.3 726,159.5 727,160.4 728,162.6 729,162.0 730,159.9 731,161.8 732,161.3 733,160.3 734,159.8 735,158.9 736,161.3 737,156.9 738,157.4 739,159.2 740,155.6 741,157.8 742,153.9 743,156.9 744,160.7 745,161.3 746,159.7 747,159.0 748,155.7 749,163.9 750,161.6 751,162.9 752,157.7 753,158.8 754,154.6 755,161.0 756,162.3 757,154.9 758,158.8 759,161.2 760,155.1 761,154.0 762,155.9 763,157.3 764,155.5 765,159.0 766,151.5 767,161.4 768,161.7 769,163.9 770,163.4 771,156.6 772,157.7 773,156.4 774,156.1 775,158.8 776,154 777,160.8 778,155.4 779,155.5 780,158.8 781,158.8 782,158.5 783,159.1 784,157.3 785,161.0 786,160.6 787,159.3 788,157.6 789,153 790,151.9 791,155.6 792,158.9 793,155.2 794,159.2 795,159.7 796,155.6 797,158.0 798,158.2 799,160.3 800,160.8 801,159.4 802,157.3 803,159.1 804,159.8 805,162.3 806,161.7 807,159.1 808,157.2 809,159.8 810,159.4 811,158.6 812,161.4 813,161.0 814,162.8 815,164.4 816,162.3 817,169.6 818,163.8 819,167.0 820,165.1 821,167.7 822,158.9 823,162.2 824,165.6 825,167.3 826,172.4 827,168.0 828,170.1 829,169.3 830,169.9 831,169.0 832,167.3 833,169.1 834,165.3 835,171.0 836,166.2 837,157 838,163 839,169.6 840,169.7 841,173.0 842,170.7 843,168.3 844,171.0 845,172.5 846,173.3 847,169.7 848,176.2 849,177.1 850,173.1 851,173.3 852,171.7 853,176.7 854,171.9 855,175.2 856,172.8 857,172.1 858,176.0 859,178.5 860,175.4 861,173.4 862,177.3 863,175.8 864,176.8 865,180.4 866,180.2 867,175.9 868,183.0 868,101.5"/></clipPath><clipPath id="cb"><polygon points="301,255.5 301,173.3 302,175.1 303,173.2 304,172.5 305,170.5 306,172.0 307,175.6 308,174.1 309,175.4 310,173.3 311,173.2 312,172.4 313,167.1 314,173.0 315,172.8 316,172.5 317,166.4 318,165.2 319,167.1 320,168.4 321,170.5 322,169.7 323,170.9 324,167.8 325,169.7 326,170.0 327,167.1 328,172.9 329,170.4 330,171.6 331,166.7 332,156.5 333,166.2 334,166.8 335,168.7 336,167.8 337,165.6 338,163.7 339,164.4 340,169.0 341,164.1 342,166.0 343,166.6 344,161.4 345,164.6 346,168.4 347,159.9 348,163.2 349,164.2 350,162.4 351,165.6 352,164.5 353,160.5 354,166.0 355,166.3 356,167.1 357,168.5 358,165.7 359,164.6 360,160.5 361,165.0 362,162.3 363,162.3 364,160.0 365,160.4 366,161.6 367,166.6 368,158.4 369,158.6 370,163.2 371,167.1 372,165.2 373,153 374,155.4 375,162.7 376,160.8 377,159.4 378,164.8 379,165.9 380,163.4 381,163.3 382,163.7 383,166.8 384,164.6 385,163.9 386,163.8 387,158.1 388,164.8 389,164.9 390,163.7 391,156.7 392,159.2 393,163.5 394,156.9 395,160.3 396,164.0 397,158.2 398,165.1 399,163.3 400,161.0 401,161.9 402,162.9 403,161.5 404,164.0 405,159.5 406,159.4 407,163.2 408,161.0 409,158.2 410,162.6 411,164.6 412,159.7 413,156.4 414,159.2 415,159.5 416,159.1 417,163.6 418,157.6 419,162.8 420,156.7 421,157.1 422,160.9 423,162.7 424,162.2 425,160.7 426,159.9 427,159.7 428,160.8 429,158.8 430,159.2 431,160.2 432,158.8 433,160.6 434,160.4 435,164.3 436,160.3 437,157.7 438,157.5 439,158.4 440,161.1 441,158.1 442,159.6 443,163.8 444,152.5 445,154.7 446,158.8 447,159.8 448,159.5 449,157.7 450,160.4 451,159.8 452,157.5 453,165.2 454,160.7 455,154 456,150 457,141 458,114 459,127 460,150 461,161.3 462,156.2 463,158.4 464,161.5 465,161.7 466,163.4 467,155.1 468,157.5 469,157.9 470,160.6 471,162.3 472,152.3 473,161.1 474,155.5 475,160.5 476,155.3 477,159.1 478,162.4 479,159.3 480,159.8 481,161.5 482,160.0 483,159.1 484,163.4 485,162.8 486,159.0 487,166.7 488,157.4 489,161.5 490,159.0 491,159.7 492,161.3 493,160.3 494,161.3 495,155.6 496,154.8 497,160.4 498,157.0 499,156.3 500,155.0 501,162.2 502,161.9 503,163.9 504,157.6 505,159.3 506,156.4 507,161.1 508,164.1 509,157.8 510,163.5 511,162.8 512,159.6 513,154.3 514,162.6 515,159.8 516,158.0 517,160.4 518,160.8 519,163.8 520,157.5 521,162.3 522,164.0 523,164.2 524,159.8 525,157.6 526,162.1 527,160.3 528,160.0 529,163.5 530,159.5 531,153.4 532,157.6 533,154.3 534,161.0 535,160.6 536,158.1 537,159.3 538,161.8 539,160.1 540,163.2 541,159.9 542,162.4 543,148 544,164.5 545,158.4 546,161.7 547,154.7 548,155.8 549,153.6 550,161.5 551,156.4 552,158.9 553,158.8 554,159.2 555,157.8 556,159.8 557,164.3 558,160.2 559,160.9 560,162.3 561,159.2 562,153 563,157.3 564,161.9 565,155.2 566,157.0 567,161.6 568,161.7 569,159.6 570,161.4 571,159.9 572,156.1 573,154.4 574,156.7 575,161.2 576,157.9 577,156.5 578,156.6 579,154.5 580,158.0 581,155.7 582,159.5 583,152.7 584,142 585,128.5 586,128.5 587,142 588,158.3 589,152.8 590,155.6 591,159.1 592,157.6 593,160.7 594,161.1 595,160.9 596,160.0 597,162.5 598,161.1 599,160.3 600,153.3 601,160.3 602,162.5 603,158.4 604,157.4 605,163.7 606,154.6 607,143 608,129.5 609,143 610,151 611,163.9 612,159.0 613,160.1 614,161.2 615,156.5 616,158.0 617,159.2 618,160.8 619,158.7 620,158.0 621,155.7 622,157.1 623,160.7 624,159.1 625,156.2 626,155.8 627,165.2 628,152 629,160.8 630,151.8 631,159.1 632,159.8 633,163.2 634,160.3 635,158.5 636,159.8 637,153.4 638,160.4 639,159.6 640,156.7 641,148.5 642,163.8 643,155.4 644,156.2 645,158.9 646,159.0 647,157.4 648,155.6 649,163.7 650,162.0 651,155.7 652,154.4 653,162.4 654,161.7 655,163.9 656,161.5 657,156.6 658,158.9 659,152.7 660,155.6 661,157.9 662,159.8 663,156.8 664,157.9 665,159.7 666,159.7 667,160.5 668,159.4 669,157.8 670,160.6 671,159.0 672,156.5 673,156.6 674,158.3 675,158.3 676,159.0 677,158.7 678,159.2 679,158.4 680,155.3 681,159.4 682,161.7 683,160.4 684,158.5 685,160.0 686,156.4 687,153.3 688,158.2 689,156.3 690,160.5 691,156.2 692,151.4 693,155.0 694,162.6 695,158.5 696,155.2 697,156.4 698,160.0 699,160.5 700,159.7 701,163.2 702,161.6 703,159.4 704,160.8 705,163.8 706,162.5 707,162.4 708,156.7 709,158.4 710,161.1 711,158.7 712,162.0 713,161.3 714,162.0 715,159.1 716,166.1 717,163.7 718,159.4 719,159.6 720,166.4 721,152.5 722,161.7 723,162.4 724,159.9 725,156.3 726,159.5 727,160.4 728,162.6 729,162.0 730,159.9 731,161.8 732,161.3 733,160.3 734,159.8 735,158.9 736,161.3 737,156.9 738,157.4 739,159.2 740,155.6 741,157.8 742,153.9 743,156.9 744,160.7 745,161.3 746,159.7 747,159.0 748,155.7 749,163.9 750,161.6 751,162.9 752,157.7 753,158.8 754,154.6 755,161.0 756,162.3 757,154.9 758,158.8 759,161.2 760,155.1 761,154.0 762,155.9 763,157.3 764,155.5 765,159.0 766,151.5 767,161.4 768,161.7 769,163.9 770,163.4 771,156.6 772,157.7 773,156.4 774,156.1 775,158.8 776,154 777,160.8 778,155.4 779,155.5 780,158.8 781,158.8 782,158.5 783,159.1 784,157.3 785,161.0 786,160.6 787,159.3 788,157.6 789,153 790,151.9 791,155.6 792,158.9 793,155.2 794,159.2 795,159.7 796,155.6 797,158.0 798,158.2 799,160.3 800,160.8 801,159.4 802,157.3 803,159.1 804,159.8 805,162.3 806,161.7 807,159.1 808,157.2 809,159.8 810,159.4 811,158.6 812,161.4 813,161.0 814,162.8 815,164.4 816,162.3 817,169.6 818,163.8 819,167.0 820,165.1 821,167.7 822,158.9 823,162.2 824,165.6 825,167.3 826,172.4 827,168.0 828,170.1 829,169.3 830,169.9 831,169.0 832,167.3 833,169.1 834,165.3 835,171.0 836,166.2 837,157 838,163 839,169.6 840,169.7 841,173.0 842,170.7 843,168.3 844,171.0 845,172.5 846,173.3 847,169.7 848,176.2 849,177.1 850,173.1 851,173.3 852,171.7 853,176.7 854,171.9 855,175.2 856,172.8 857,172.1 858,176.0 859,178.5 860,175.4 861,173.4 862,177.3 863,175.8 864,176.8 865,180.4 866,180.2 867,175.9 868,183.0 868,255.5"/></clipPath><g clip-path="url(#ca)"><line x1="336.5" y1="103.5" x2="336.5" y2="255.5" stroke="#808080" stroke-opacity=".85" stroke-width="1"/><line x1="429.5" y1="103.5" x2="429.5" y2="255.5" stroke="#808080" stroke-opacity=".85" stroke-width="1"/><line x1="522.5" y1="103.5" x2="522.5" y2="255.5" stroke="#808080" stroke-opacity=".85" stroke-width="1"/><line x1="615.5" y1="103.5" x2="615.5" y2="255.5" stroke="#808080" stroke-opacity=".85" stroke-width="1"/><line x1="708.5" y1="103.5" x2="708.5" y2="255.5" stroke="#808080" stroke-opacity=".85" stroke-width="1"/><line x1="801.5" y1="103.5" x2="801.5" y2="255.5" stroke="#808080" stroke-opacity=".85" stroke-width="1"/><line x1="301" y1="103.5" x2="868" y2="103.5" stroke="#8c8c8c" stroke-opacity=".62" stroke-width="1" stroke-dasharray="4,2"/><line x1="301" y1="114.5" x2="868" y2="114.5" stroke="#8c8c8c" stroke-opacity=".62" stroke-width="1" stroke-dasharray="4,2"/><line x1="301" y1="126.5" x2="868" y2="126.5" stroke="#8c8c8c" stroke-opacity=".62" stroke-width="1" stroke-dasharray="4,2"/><line x1="301" y1="138.5" x2="868" y2="138.5" stroke="#8c8c8c" stroke-opacity=".62" stroke-width="1" stroke-dasharray="4,2"/><line x1="301" y1="149.5" x2="868" y2="149.5" stroke="#8c8c8c" stroke-opacity=".62" stroke-width="1" stroke-dasharray="4,2"/><line x1="301" y1="161.5" x2="868" y2="161.5" stroke="#8c8c8c" stroke-opacity=".62" stroke-width="1" stroke-dasharray="4,2"/><line x1="301" y1="173.5" x2="868" y2="173.5" stroke="#8c8c8c" stroke-opacity=".62" stroke-width="1" stroke-dasharray="4,2"/><line x1="301" y1="184.5" x2="868" y2="184.5" stroke="#8c8c8c" stroke-opacity=".62" stroke-width="1" stroke-dasharray="4,2"/><line x1="301" y1="196.5" x2="868" y2="196.5" stroke="#8c8c8c" stroke-opacity=".62" stroke-width="1" stroke-dasharray="4,2"/><line x1="301" y1="208.5" x2="868" y2="208.5" stroke="#8c8c8c" stroke-opacity=".62" stroke-width="1" stroke-dasharray="4,2"/><line x1="301" y1="219.5" x2="868" y2="219.5" stroke="#8c8c8c" stroke-opacity=".62" stroke-width="1" stroke-dasharray="4,2"/><line x1="301" y1="231.5" x2="868" y2="231.5" stroke="#8c8c8c" stroke-opacity=".62" stroke-width="1" stroke-dasharray="4,2"/><line x1="301" y1="243.5" x2="868" y2="243.5" stroke="#8c8c8c" stroke-opacity=".62" stroke-width="1" stroke-dasharray="4,2"/></g><g clip-path="url(#cb)"><rect x="336.0" y="103.5" width="1" height="152.0" fill="url(#vg)"/><rect x="429.0" y="103.5" width="1" height="152.0" fill="url(#vg)"/><rect x="522.0" y="103.5" width="1" height="152.0" fill="url(#vg)"/><rect x="615.0" y="103.5" width="1" height="152.0" fill="url(#vg)"/><rect x="708.0" y="103.5" width="1" height="152.0" fill="url(#vg)"/><rect x="801.0" y="103.5" width="1" height="152.0" fill="url(#vg)"/><line x1="301" y1="103.5" x2="868" y2="103.5" stroke="#b0c8f0" stroke-opacity="0.3" stroke-width="1" stroke-dasharray="4,2"/><line x1="301" y1="114.5" x2="868" y2="114.5" stroke="#b0c8f0" stroke-opacity="0.3" stroke-width="1" stroke-dasharray="4,2"/><line x1="301" y1="126.5" x2="868" y2="126.5" stroke="#b0c8f0" stroke-opacity="0.3" stroke-width="1" stroke-dasharray="4,2"/><line x1="301" y1="138.5" x2="868" y2="138.5" stroke="#b0c8f0" stroke-opacity="0.3" stroke-width="1" stroke-dasharray="4,2"/><line x1="301" y1="149.5" x2="868" y2="149.5" stroke="#b0c8f0" stroke-opacity="0.3" stroke-width="1" stroke-dasharray="4,2"/><line x1="301" y1="161.5" x2="868" y2="161.5" stroke="#b0c8f0" stroke-opacity="0.3" stroke-width="1" stroke-dasharray="4,2"/><line x1="301" y1="173.5" x2="868" y2="173.5" stroke="#b0c8f0" stroke-opacity="0.28" stroke-width="1" stroke-dasharray="4,2"/><line x1="301" y1="184.5" x2="868" y2="184.5" stroke="#b0c8f0" stroke-opacity="0.25" stroke-width="1" stroke-dasharray="4,2"/><line x1="301" y1="196.5" x2="868" y2="196.5" stroke="#b0c8f0" stroke-opacity="0.2" stroke-width="1" stroke-dasharray="4,2"/><line x1="301" y1="208.5" x2="868" y2="208.5" stroke="#b0c8f0" stroke-opacity="0.16" stroke-width="1" stroke-dasharray="4,2"/><line x1="301" y1="219.5" x2="868" y2="219.5" stroke="#b0c8f0" stroke-opacity="0.13" stroke-width="1" stroke-dasharray="4,2"/><line x1="301" y1="231.5" x2="868" y2="231.5" stroke="#b0c8f0" stroke-opacity="0.1" stroke-width="1" stroke-dasharray="4,2"/><line x1="301" y1="243.5" x2="868" y2="243.5" stroke="#b0c8f0" stroke-opacity="0.08" stroke-width="1" stroke-dasharray="4,2"/></g><line x1="301.5" y1="103.5" x2="301.5" y2="255.5" stroke="#c8c8c8" stroke-width="1"/><line x1="301" y1="255.5" x2="868" y2="255.5" stroke="#6d6f8a" stroke-width="1"/><polyline points="301,173.3 302,175.1 303,173.2 304,172.5 305,170.5 306,172.0 307,175.6 308,174.1 309,175.4 310,173.3 311,173.2 312,172.4 313,167.1 314,173.0 315,172.8 316,172.5 317,166.4 318,165.2 319,167.1 320,168.4 321,170.5 322,169.7 323,170.9 324,167.8 325,169.7 326,170.0 327,167.1 328,172.9 329,170.4 330,171.6 331,166.7 332,156.5 333,166.2 334,166.8 335,168.7 336,167.8 337,165.6 338,163.7 339,164.4 340,169.0 341,164.1 342,166.0 343,166.6 344,161.4 345,164.6 346,168.4 347,159.9 348,163.2 349,164.2 350,162.4 351,165.6 352,164.5 353,160.5 354,166.0 355,166.3 356,167.1 357,168.5 358,165.7 359,164.6 360,160.5 361,165.0 362,162.3 363,162.3 364,160.0 365,160.4 366,161.6 367,166.6 368,158.4 369,158.6 370,163.2 371,167.1 372,165.2 373,153 374,155.4 375,162.7 376,160.8 377,159.4 378,164.8 379,165.9 380,163.4 381,163.3 382,163.7 383,166.8 384,164.6 385,163.9 386,163.8 387,158.1 388,164.8 389,164.9 390,163.7 391,156.7 392,159.2 393,163.5 394,156.9 395,160.3 396,164.0 397,158.2 398,165.1 399,163.3 400,161.0 401,161.9 402,162.9 403,161.5 404,164.0 405,159.5 406,159.4 407,163.2 408,161.0 409,158.2 410,162.6 411,164.6 412,159.7 413,156.4 414,159.2 415,159.5 416,159.1 417,163.6 418,157.6 419,162.8 420,156.7 421,157.1 422,160.9 423,162.7 424,162.2 425,160.7 426,159.9 427,159.7 428,160.8 429,158.8 430,159.2 431,160.2 432,158.8 433,160.6 434,160.4 435,164.3 436,160.3 437,157.7 438,157.5 439,158.4 440,161.1 441,158.1 442,159.6 443,163.8 444,152.5 445,154.7 446,158.8 447,159.8 448,159.5 449,157.7 450,160.4 451,159.8 452,157.5 453,165.2 454,160.7 455,154 456,150 457,141 458,114 459,127 460,150 461,161.3 462,156.2 463,158.4 464,161.5 465,161.7 466,163.4 467,155.1 468,157.5 469,157.9 470,160.6 471,162.3 472,152.3 473,161.1 474,155.5 475,160.5 476,155.3 477,159.1 478,162.4 479,159.3 480,159.8 481,161.5 482,160.0 483,159.1 484,163.4 485,162.8 486,159.0 487,166.7 488,157.4 489,161.5 490,159.0 491,159.7 492,161.3 493,160.3 494,161.3 495,155.6 496,154.8 497,160.4 498,157.0 499,156.3 500,155.0 501,162.2 502,161.9 503,163.9 504,157.6 505,159.3 506,156.4 507,161.1 508,164.1 509,157.8 510,163.5 511,162.8 512,159.6 513,154.3 514,162.6 515,159.8 516,158.0 517,160.4 518,160.8 519,163.8 520,157.5 521,162.3 522,164.0 523,164.2 524,159.8 525,157.6 526,162.1 527,160.3 528,160.0 529,163.5 530,159.5 531,153.4 532,157.6 533,154.3 534,161.0 535,160.6 536,158.1 537,159.3 538,161.8 539,160.1 540,163.2 541,159.9 542,162.4 543,148 544,164.5 545,158.4 546,161.7 547,154.7 548,155.8 549,153.6 550,161.5 551,156.4 552,158.9 553,158.8 554,159.2 555,157.8 556,159.8 557,164.3 558,160.2 559,160.9 560,162.3 561,159.2 562,153 563,157.3 564,161.9 565,155.2 566,157.0 567,161.6 568,161.7 569,159.6 570,161.4 571,159.9 572,156.1 573,154.4 574,156.7 575,161.2 576,157.9 577,156.5 578,156.6 579,154.5 580,158.0 581,155.7 582,159.5 583,152.7 584,142 585,128.5 586,128.5 587,142 588,158.3 589,152.8 590,155.6 591,159.1 592,157.6 593,160.7 594,161.1 595,160.9 596,160.0 597,162.5 598,161.1 599,160.3 600,153.3 601,160.3 602,162.5 603,158.4 604,157.4 605,163.7 606,154.6 607,143 608,129.5 609,143 610,151 611,163.9 612,159.0 613,160.1 614,161.2 615,156.5 616,158.0 617,159.2 618,160.8 619,158.7 620,158.0 621,155.7 622,157.1 623,160.7 624,159.1 625,156.2 626,155.8 627,165.2 628,152 629,160.8 630,151.8 631,159.1 632,159.8 633,163.2 634,160.3 635,158.5 636,159.8 637,153.4 638,160.4 639,159.6 640,156.7 641,148.5 642,163.8 643,155.4 644,156.2 645,158.9 646,159.0 647,157.4 648,155.6 649,163.7 650,162.0 651,155.7 652,154.4 653,162.4 654,161.7 655,163.9 656,161.5 657,156.6 658,158.9 659,152.7 660,155.6 661,157.9 662,159.8 663,156.8 664,157.9 665,159.7 666,159.7 667,160.5 668,159.4 669,157.8 670,160.6 671,159.0 672,156.5 673,156.6 674,158.3 675,158.3 676,159.0 677,158.7 678,159.2 679,158.4 680,155.3 681,159.4 682,161.7 683,160.4 684,158.5 685,160.0 686,156.4 687,153.3 688,158.2 689,156.3 690,160.5 691,156.2 692,151.4 693,155.0 694,162.6 695,158.5 696,155.2 697,156.4 698,160.0 699,160.5 700,159.7 701,163.2 702,161.6 703,159.4 704,160.8 705,163.8 706,162.5 707,162.4 708,156.7 709,158.4 710,161.1 711,158.7 712,162.0 713,161.3 714,162.0 715,159.1 716,166.1 717,163.7 718,159.4 719,159.6 720,166.4 721,152.5 722,161.7 723,162.4 724,159.9 725,156.3 726,159.5 727,160.4 728,162.6 729,162.0 730,159.9 731,161.8 732,161.3 733,160.3 734,159.8 735,158.9 736,161.3 737,156.9 738,157.4 739,159.2 740,155.6 741,157.8 742,153.9 743,156.9 744,160.7 745,161.3 746,159.7 747,159.0 748,155.7 749,163.9 750,161.6 751,162.9 752,157.7 753,158.8 754,154.6 755,161.0 756,162.3 757,154.9 758,158.8 759,161.2 760,155.1 761,154.0 762,155.9 763,157.3 764,155.5 765,159.0 766,151.5 767,161.4 768,161.7 769,163.9 770,163.4 771,156.6 772,157.7 773,156.4 774,156.1 775,158.8 776,154 777,160.8 778,155.4 779,155.5 780,158.8 781,158.8 782,158.5 783,159.1 784,157.3 785,161.0 786,160.6 787,159.3 788,157.6 789,153 790,151.9 791,155.6 792,158.9 793,155.2 794,159.2 795,159.7 796,155.6 797,158.0 798,158.2 799,160.3 800,160.8 801,159.4 802,157.3 803,159.1 804,159.8 805,162.3 806,161.7 807,159.1 808,157.2 809,159.8 810,159.4 811,158.6 812,161.4 813,161.0 814,162.8 815,164.4 816,162.3 817,169.6 818,163.8 819,167.0 820,165.1 821,167.7 822,158.9 823,162.2 824,165.6 825,167.3 826,172.4 827,168.0 828,170.1 829,169.3 830,169.9 831,169.0 832,167.3 833,169.1 834,165.3 835,171.0 836,166.2 837,157 838,163 839,169.6 840,169.7 841,173.0 842,170.7 843,168.3 844,171.0 845,172.5 846,173.3 847,169.7 848,176.2 849,177.1 850,173.1 851,173.3 852,171.7 853,176.7 854,171.9 855,175.2 856,172.8 857,172.1 858,176.0 859,178.5 860,175.4 861,173.4 862,177.3 863,175.8 864,176.8 865,180.4 866,180.2 867,175.9 868,183.0" fill="none" stroke="#fff" stroke-width="0.95" stroke-linejoin="round"/><rect x="451" y="73" width="14" height="212" fill="#9a9a9a" fill-opacity=".38"/><line x1="457.5" y1="73" x2="457.5" y2="285" stroke="#f40808" stroke-width="1.1"/><text x="296" y="106.9" text-anchor="end" font-family="Liberation Sans,sans-serif" font-size="11" fill="#f2f2f2">0</text><text x="296" y="118.5" text-anchor="end" font-family="Liberation Sans,sans-serif" font-size="11" fill="#f2f2f2">-10</text><text x="296" y="130.5" text-anchor="end" font-family="Liberation Sans,sans-serif" font-size="11" fill="#f2f2f2">-20</text><text x="296" y="142.5" text-anchor="end" font-family="Liberation Sans,sans-serif" font-size="11" fill="#f2f2f2">-30</text><text x="296" y="153.5" text-anchor="end" font-family="Liberation Sans,sans-serif" font-size="11" fill="#f2f2f2">-40</text><text x="296" y="165.5" text-anchor="end" font-family="Liberation Sans,sans-serif" font-size="11" fill="#f2f2f2">-50</text><text x="296" y="177.5" text-anchor="end" font-family="Liberation Sans,sans-serif" font-size="11" fill="#f2f2f2">-60</text><text x="296" y="188.5" text-anchor="end" font-family="Liberation Sans,sans-serif" font-size="11" fill="#f2f2f2">-70</text><text x="296" y="200.5" text-anchor="end" font-family="Liberation Sans,sans-serif" font-size="11" fill="#f2f2f2">-80</text><text x="296" y="212.5" text-anchor="end" font-family="Liberation Sans,sans-serif" font-size="11" fill="#f2f2f2">-90</text><text x="296" y="223.5" text-anchor="end" font-family="Liberation Sans,sans-serif" font-size="11" fill="#f2f2f2">-100</text><text x="296" y="235.5" text-anchor="end" font-family="Liberation Sans,sans-serif" font-size="11" fill="#f2f2f2">-110</text><text x="296" y="247.5" text-anchor="end" font-family="Liberation Sans,sans-serif" font-size="11" fill="#f2f2f2">-120</text><text x="296" y="258.5" text-anchor="end" font-family="Liberation Sans,sans-serif" font-size="11" fill="#f2f2f2">-130</text><text x="336" y="274" text-anchor="middle" font-family="Liberation Sans,sans-serif" font-size="11" letter-spacing="-0.2" fill="#f2f2f2">143,325MHz</text><text x="429" y="274" text-anchor="middle" font-family="Liberation Sans,sans-serif" font-size="11" letter-spacing="-0.2" fill="#f2f2f2">143,850MHz</text><text x="522" y="274" text-anchor="middle" font-family="Liberation Sans,sans-serif" font-size="11" letter-spacing="-0.2" fill="#f2f2f2">144,375MHz</text><text x="615" y="274" text-anchor="middle" font-family="Liberation Sans,sans-serif" font-size="11" letter-spacing="-0.2" fill="#f2f2f2">144,900MHz</text><text x="708" y="274" text-anchor="middle" font-family="Liberation Sans,sans-serif" font-size="11" letter-spacing="-0.2" fill="#f2f2f2">145,425MHz</text><text x="801" y="274" text-anchor="middle" font-family="Liberation Sans,sans-serif" font-size="11" letter-spacing="-0.2" fill="#f2f2f2">145,950MHz</text></svg>
<div style="left:271px;top:289px;width:627px;height:445px;background:#000"></div>
<div style="left:301px;top:289px;width:567px;height:445px;background:linear-gradient(180deg,rgba(0,0,24,0) 0px,rgba(0,0,24,0) 126px,rgba(0,0,24,.14) 132px,rgba(0,0,24,.17) 236px,rgba(0,0,24,.27) 242px,rgba(0,0,24,.3) 445px),linear-gradient(90deg,#00067e,#00067e)"></div>
<svg style="left:301px;top:289px" width="567" height="445"><defs><filter id="nz" x="0" y="0" width="100%" height="100%" color-interpolation-filters="sRGB"><feTurbulence type="fractalNoise" baseFrequency="0.62" numOctaves="1" seed="3"/><feColorMatrix type="matrix" values="0 0 0 0 0.05  0 0 0 0 0.27  0 0 0 0 0.9  2.0 0 0 0 -1.15"/></filter><filter id="nd" x="0" y="0" width="100%" height="100%" color-interpolation-filters="sRGB"><feTurbulence type="fractalNoise" baseFrequency="0.62" numOctaves="1" seed="11"/><feColorMatrix type="matrix" values="0 0 0 0 0  0 0 0 0 0  0 0 0 0 0.34  0 -2.6 0 0 1.5"/></filter></defs><rect width="567" height="445" filter="url(#nd)"/><rect width="567" height="445" filter="url(#nz)"/></svg>
<div style="left:301px;top:289px;width:567px;height:445px;background:linear-gradient(90deg,rgba(0,0,14,.72) 0px,rgba(0,0,14,.62) 14px,rgba(0,0,14,.47) 34px,rgba(0,0,14,.24) 70px,rgba(0,0,14,.07) 150px,rgba(0,0,14,0) 250px,rgba(0,0,14,0) 390px,rgba(0,0,14,.09) 440px,rgba(0,0,14,.2) 480px,rgba(0,0,14,.37) 510px,rgba(0,0,14,.55) 535px,rgba(0,0,14,.66) 552px,rgba(0,0,14,.74) 567px)"></div>
<div style="left:301px;top:527px;width:70px;height:207px;background:linear-gradient(90deg,rgba(0,0,14,.3) 0px,rgba(0,0,14,.22) 30px,rgba(0,0,14,0) 70px)"></div>
<div style="left:798px;top:527px;width:70px;height:207px;background:linear-gradient(90deg,rgba(0,0,14,0) 0px,rgba(0,0,14,.15) 40px,rgba(0,0,14,.2) 70px)"></div>
<svg style="left:0;top:0" width="1366" height="768" viewBox="0 0 1366 768"><defs><linearGradient id="hg" gradientUnits="userSpaceOnUse" x1="301" y1="0" x2="868" y2="0"><stop offset="0" stop-color="#4aa0ff" stop-opacity="0"/><stop offset=".07" stop-color="#4aa0ff" stop-opacity=".25"/><stop offset=".16" stop-color="#52a8ff" stop-opacity="1"/><stop offset=".72" stop-color="#52a8ff" stop-opacity="1"/><stop offset=".9" stop-color="#4aa0ff" stop-opacity=".35"/><stop offset="1" stop-color="#4aa0ff" stop-opacity="0"/></linearGradient><linearGradient id="hg2" gradientUnits="userSpaceOnUse" x1="301" y1="0" x2="868" y2="0"><stop offset="0" stop-color="#52a8ff" stop-opacity=".8"/><stop offset=".1" stop-color="#52a8ff" stop-opacity="1"/><stop offset=".72" stop-color="#52a8ff" stop-opacity="1"/><stop offset=".9" stop-color="#4aa0ff" stop-opacity=".35"/><stop offset="1" stop-color="#4aa0ff" stop-opacity="0"/></linearGradient></defs><linearGradient id="h452" gradientUnits="userSpaceOnUse" x1="301" y1="0" x2="868" y2="0"><stop offset="0.002" stop-color="#4aa0ff" stop-opacity="0"/><stop offset="0.104" stop-color="#52a8ff" stop-opacity="1"/><stop offset=".72" stop-color="#52a8ff" stop-opacity="1"/><stop offset=".9" stop-color="#4aa0ff" stop-opacity=".35"/><stop offset="1" stop-color="#4aa0ff" stop-opacity="0"/></linearGradient><line x1="302" y1="452.5" x2="868" y2="452.5" stroke="url(#h452)" stroke-opacity="0.6" stroke-width="1" stroke-dasharray="9 1 12 1 12 1 6 1 12 1 3 1 4 2 3 2 9 1 9 1 2 1 6 1" stroke-dashoffset="5"/><linearGradient id="h488" gradientUnits="userSpaceOnUse" x1="301" y1="0" x2="868" y2="0"><stop offset="0.002" stop-color="#4aa0ff" stop-opacity="0"/><stop offset="0.104" stop-color="#52a8ff" stop-opacity="1"/><stop offset=".72" stop-color="#52a8ff" stop-opacity="1"/><stop offset=".9" stop-color="#4aa0ff" stop-opacity=".35"/><stop offset="1" stop-color="#4aa0ff" stop-opacity="0"/></linearGradient><line x1="302" y1="488.5" x2="868" y2="488.5" stroke="url(#h488)" stroke-opacity="0.7" stroke-width="1" stroke-dasharray="6 1 2 1 9 2 3 1 2 1 3 1 3 1 4 1 3 1 3 1 6 1 2 1" stroke-dashoffset="13"/><linearGradient id="h501" gradientUnits="userSpaceOnUse" x1="301" y1="0" x2="868" y2="0"><stop offset="0.019" stop-color="#4aa0ff" stop-opacity="0"/><stop offset="0.122" stop-color="#52a8ff" stop-opacity="1"/><stop offset=".72" stop-color="#52a8ff" stop-opacity="1"/><stop offset=".9" stop-color="#4aa0ff" stop-opacity=".35"/><stop offset="1" stop-color="#4aa0ff" stop-opacity="0"/></linearGradient><line x1="312" y1="501.5" x2="868" y2="501.5" stroke="url(#h501)" stroke-opacity="0.3" stroke-width="1" stroke-dasharray="1 1 2 1 2 2 6 3 3 1 3 4 4 2 1 2 2 6 2 2 4 2 1 2" stroke-dashoffset="15"/><linearGradient id="h527" gradientUnits="userSpaceOnUse" x1="301" y1="0" x2="868" y2="0"><stop offset="0.000" stop-color="#4aa0ff" stop-opacity="0"/><stop offset="0.095" stop-color="#52a8ff" stop-opacity="1"/><stop offset=".72" stop-color="#52a8ff" stop-opacity="1"/><stop offset=".9" stop-color="#4aa0ff" stop-opacity=".35"/><stop offset="1" stop-color="#4aa0ff" stop-opacity="0"/></linearGradient><line x1="301" y1="527.5" x2="868" y2="527.5" stroke="url(#h527)" stroke-opacity="0.8" stroke-width="1" stroke-dasharray="12 1 2 1 2 1 6 1 9 2 4 2 9 1 6 1 12 1 9 1 2 1 6 1" stroke-dashoffset="16"/><linearGradient id="h541" gradientUnits="userSpaceOnUse" x1="301" y1="0" x2="868" y2="0"><stop offset="0.160" stop-color="#4aa0ff" stop-opacity="0"/><stop offset="0.263" stop-color="#52a8ff" stop-opacity="1"/><stop offset=".72" stop-color="#52a8ff" stop-opacity="1"/><stop offset=".9" stop-color="#4aa0ff" stop-opacity=".35"/><stop offset="1" stop-color="#4aa0ff" stop-opacity="0"/></linearGradient><line x1="392" y1="541.5" x2="868" y2="541.5" stroke="url(#h541)" stroke-opacity="0.18" stroke-width="1" stroke-dasharray="2 3 2 6 2 1 3 4 6 6 2 6 2 1 2 1 1 2 3 3 2 1 2 2" stroke-dashoffset="17"/><linearGradient id="h545" gradientUnits="userSpaceOnUse" x1="301" y1="0" x2="868" y2="0"><stop offset="0.125" stop-color="#4aa0ff" stop-opacity="0"/><stop offset="0.228" stop-color="#52a8ff" stop-opacity="1"/><stop offset=".72" stop-color="#52a8ff" stop-opacity="1"/><stop offset=".9" stop-color="#4aa0ff" stop-opacity=".35"/><stop offset="1" stop-color="#4aa0ff" stop-opacity="0"/></linearGradient><line x1="372" y1="545.5" x2="868" y2="545.5" stroke="url(#h545)" stroke-opacity="0.25" stroke-width="1" stroke-dasharray="1 2 4 2 2 1 6 1 4 1 4 4 2 2 1 4 1 1 3 3 2 1 1 4" stroke-dashoffset="19"/><linearGradient id="h547" gradientUnits="userSpaceOnUse" x1="301" y1="0" x2="868" y2="0"><stop offset="0.178" stop-color="#4aa0ff" stop-opacity="0"/><stop offset="0.280" stop-color="#52a8ff" stop-opacity="1"/><stop offset=".72" stop-color="#52a8ff" stop-opacity="1"/><stop offset=".9" stop-color="#4aa0ff" stop-opacity=".35"/><stop offset="1" stop-color="#4aa0ff" stop-opacity="0"/></linearGradient><line x1="402" y1="547.5" x2="868" y2="547.5" stroke="url(#h547)" stroke-opacity="0.18" stroke-width="1" stroke-dasharray="2 6 2 2 4 2 1 1 4 1 6 2 2 6 1 1 4 3 1 4 6 2 1 1" stroke-dashoffset="13"/><linearGradient id="h563" gradientUnits="userSpaceOnUse" x1="301" y1="0" x2="868" y2="0"><stop offset="0.090" stop-color="#4aa0ff" stop-opacity="0"/><stop offset="0.192" stop-color="#52a8ff" stop-opacity="1"/><stop offset=".72" stop-color="#52a8ff" stop-opacity="1"/><stop offset=".9" stop-color="#4aa0ff" stop-opacity=".35"/><stop offset="1" stop-color="#4aa0ff" stop-opacity="0"/></linearGradient><line x1="352" y1="563.5" x2="868" y2="563.5" stroke="url(#h563)" stroke-opacity="0.3" stroke-width="1" stroke-dasharray="2 1 1 6 2 2 1 2 3 6 1 3 2 2 4 4 2 2 2 2 2 2 1 1" stroke-dashoffset="12"/><linearGradient id="h567" gradientUnits="userSpaceOnUse" x1="301" y1="0" x2="868" y2="0"><stop offset="0.125" stop-color="#4aa0ff" stop-opacity="0"/><stop offset="0.228" stop-color="#52a8ff" stop-opacity="1"/><stop offset=".72" stop-color="#52a8ff" stop-opacity="1"/><stop offset=".9" stop-color="#4aa0ff" stop-opacity=".35"/><stop offset="1" stop-color="#4aa0ff" stop-opacity="0"/></linearGradient><line x1="372" y1="567.5" x2="868" y2="567.5" stroke="url(#h567)" stroke-opacity="0.2" stroke-width="1" stroke-dasharray="6 3 1 4 2 6 2 1 1 2 2 3 6 3 6 3 2 1 6 6 6 2 4 3" stroke-dashoffset="1"/><linearGradient id="h592" gradientUnits="userSpaceOnUse" x1="301" y1="0" x2="868" y2="0"><stop offset="0.019" stop-color="#4aa0ff" stop-opacity="0"/><stop offset="0.122" stop-color="#52a8ff" stop-opacity="1"/><stop offset=".72" stop-color="#52a8ff" stop-opacity="1"/><stop offset=".9" stop-color="#4aa0ff" stop-opacity=".35"/><stop offset="1" stop-color="#4aa0ff" stop-opacity="0"/></linearGradient><line x1="312" y1="592.5" x2="868" y2="592.5" stroke="url(#h592)" stroke-opacity="0.35" stroke-width="1" stroke-dasharray="6 2 2 3 4 4 2 6 2 2 6 4 4 2 2 4 1 3 6 1 2 3 6 2" stroke-dashoffset="10"/><linearGradient id="h604" gradientUnits="userSpaceOnUse" x1="301" y1="0" x2="868" y2="0"><stop offset="0.000" stop-color="#4aa0ff" stop-opacity="0"/><stop offset="0.095" stop-color="#52a8ff" stop-opacity="1"/><stop offset=".72" stop-color="#52a8ff" stop-opacity="1"/><stop offset=".9" stop-color="#4aa0ff" stop-opacity=".35"/><stop offset="1" stop-color="#4aa0ff" stop-opacity="0"/></linearGradient><line x1="301" y1="604.5" x2="868" y2="604.5" stroke="url(#h604)" stroke-opacity="0.55" stroke-width="1" stroke-dasharray="12 1 6 1 9 1 4 1 12 1 12 2 4 1 12 2 4 1 9 1 9 1 3 1" stroke-dashoffset="15"/><linearGradient id="h611" gradientUnits="userSpaceOnUse" x1="301" y1="0" x2="868" y2="0"><stop offset="0.019" stop-color="#4aa0ff" stop-opacity="0"/><stop offset="0.122" stop-color="#52a8ff" stop-opacity="1"/><stop offset=".72" stop-color="#52a8ff" stop-opacity="1"/><stop offset=".9" stop-color="#4aa0ff" stop-opacity=".35"/><stop offset="1" stop-color="#4aa0ff" stop-opacity="0"/></linearGradient><line x1="312" y1="611.5" x2="868" y2="611.5" stroke="url(#h611)" stroke-opacity="0.22" stroke-width="1" stroke-dasharray="2 4 1 4 4 4 2 1 3 6 3 3 4 2 2 3 3 6 6 4 2 4 1 1" stroke-dashoffset="5"/><linearGradient id="h634" gradientUnits="userSpaceOnUse" x1="301" y1="0" x2="868" y2="0"><stop offset="0.125" stop-color="#4aa0ff" stop-opacity="0"/><stop offset="0.228" stop-color="#52a8ff" stop-opacity="1"/><stop offset=".72" stop-color="#52a8ff" stop-opacity="1"/><stop offset=".9" stop-color="#4aa0ff" stop-opacity=".35"/><stop offset="1" stop-color="#4aa0ff" stop-opacity="0"/></linearGradient><line x1="372" y1="634.5" x2="868" y2="634.5" stroke="url(#h634)" stroke-opacity="0.18" stroke-width="1" stroke-dasharray="3 2 3 4 1 1 6 4 1 4 4 1 2 1 1 1 1 1 2 1 2 1 3 1" stroke-dashoffset="13"/><linearGradient id="h639" gradientUnits="userSpaceOnUse" x1="301" y1="0" x2="868" y2="0"><stop offset="0.000" stop-color="#4aa0ff" stop-opacity="0"/><stop offset="0.093" stop-color="#52a8ff" stop-opacity="1"/><stop offset=".72" stop-color="#52a8ff" stop-opacity="1"/><stop offset=".9" stop-color="#4aa0ff" stop-opacity=".35"/><stop offset="1" stop-color="#4aa0ff" stop-opacity="0"/></linearGradient><line x1="301" y1="639.5" x2="868" y2="639.5" stroke="url(#h639)" stroke-opacity="0.85" stroke-width="1" stroke-dasharray="6 1 6 1 9 1 3 1 2 1 6 1 6 1 12 1 2 1 2 1 9 1 9 1" stroke-dashoffset="11"/><linearGradient id="h652" gradientUnits="userSpaceOnUse" x1="301" y1="0" x2="868" y2="0"><stop offset="0.058" stop-color="#4aa0ff" stop-opacity="0"/><stop offset="0.160" stop-color="#52a8ff" stop-opacity="1"/><stop offset=".72" stop-color="#52a8ff" stop-opacity="1"/><stop offset=".9" stop-color="#4aa0ff" stop-opacity=".35"/><stop offset="1" stop-color="#4aa0ff" stop-opacity="0"/></linearGradient><line x1="334" y1="652.5" x2="868" y2="652.5" stroke="url(#h652)" stroke-opacity="0.4" stroke-width="1" stroke-dasharray="6 1 2 2 6 3 4 3 2 2 1 1 3 2 3 2 1 1 3 1 2 6 4 1" stroke-dashoffset="12"/><linearGradient id="h658" gradientUnits="userSpaceOnUse" x1="301" y1="0" x2="868" y2="0"><stop offset="0.037" stop-color="#4aa0ff" stop-opacity="0"/><stop offset="0.139" stop-color="#52a8ff" stop-opacity="1"/><stop offset=".72" stop-color="#52a8ff" stop-opacity="1"/><stop offset=".9" stop-color="#4aa0ff" stop-opacity=".35"/><stop offset="1" stop-color="#4aa0ff" stop-opacity="0"/></linearGradient><line x1="322" y1="658.5" x2="868" y2="658.5" stroke="url(#h658)" stroke-opacity="0.6" stroke-width="1" stroke-dasharray="2 1 9 1 4 2 6 2 3 2 4 2 12 2 6 1 9 1 12 1 6 1 6 1" stroke-dashoffset="10"/><linearGradient id="h675" gradientUnits="userSpaceOnUse" x1="301" y1="0" x2="868" y2="0"><stop offset="0.160" stop-color="#4aa0ff" stop-opacity="0"/><stop offset="0.263" stop-color="#52a8ff" stop-opacity="1"/><stop offset=".72" stop-color="#52a8ff" stop-opacity="1"/><stop offset=".9" stop-color="#4aa0ff" stop-opacity=".35"/><stop offset="1" stop-color="#4aa0ff" stop-opacity="0"/></linearGradient><line x1="392" y1="675.5" x2="868" y2="675.5" stroke="url(#h675)" stroke-opacity="0.15" stroke-width="1" stroke-dasharray="2 2 2 1 2 1 1 4 3 2 1 2 1 6 1 6 2 1 2 3 3 2 1 2" stroke-dashoffset="1"/><linearGradient id="h682" gradientUnits="userSpaceOnUse" x1="301" y1="0" x2="868" y2="0"><stop offset="0.109" stop-color="#4aa0ff" stop-opacity="0"/><stop offset="0.212" stop-color="#52a8ff" stop-opacity="1"/><stop offset=".72" stop-color="#52a8ff" stop-opacity="1"/><stop offset=".9" stop-color="#4aa0ff" stop-opacity=".35"/><stop offset="1" stop-color="#4aa0ff" stop-opacity="0"/></linearGradient><line x1="363" y1="682.5" x2="868" y2="682.5" stroke="url(#h682)" stroke-opacity="0.3" stroke-width="1" stroke-dasharray="1 2 2 6 1 4 2 2 2 3 2 3 4 6 3 4 1 1 6 1 2 2 3 4" stroke-dashoffset="10"/><linearGradient id="h684" gradientUnits="userSpaceOnUse" x1="301" y1="0" x2="868" y2="0"><stop offset="0.109" stop-color="#4aa0ff" stop-opacity="0"/><stop offset="0.212" stop-color="#52a8ff" stop-opacity="1"/><stop offset=".72" stop-color="#52a8ff" stop-opacity="1"/><stop offset=".9" stop-color="#4aa0ff" stop-opacity=".35"/><stop offset="1" stop-color="#4aa0ff" stop-opacity="0"/></linearGradient><line x1="363" y1="684.5" x2="868" y2="684.5" stroke="url(#h684)" stroke-opacity="0.45" stroke-width="1" stroke-dasharray="3 2 4 3 1 2 2 2 4 4 6 3 1 1 1 2 3 2 4 1 4 3 1 1" stroke-dashoffset="13"/><linearGradient id="h691" gradientUnits="userSpaceOnUse" x1="301" y1="0" x2="868" y2="0"><stop offset="0.148" stop-color="#4aa0ff" stop-opacity="0"/><stop offset="0.250" stop-color="#52a8ff" stop-opacity="1"/><stop offset=".72" stop-color="#52a8ff" stop-opacity="1"/><stop offset=".9" stop-color="#4aa0ff" stop-opacity=".35"/><stop offset="1" stop-color="#4aa0ff" stop-opacity="0"/></linearGradient><line x1="385" y1="691.5" x2="868" y2="691.5" stroke="url(#h691)" stroke-opacity="0.3" stroke-width="1" stroke-dasharray="6 6 2 3 3 4 4 4 4 2 6 6 2 2 2 4 6 4 1 2 2 6 6 1" stroke-dashoffset="9"/><linearGradient id="h696" gradientUnits="userSpaceOnUse" x1="301" y1="0" x2="868" y2="0"><stop offset="0.002" stop-color="#4aa0ff" stop-opacity="0"/><stop offset="0.104" stop-color="#52a8ff" stop-opacity="1"/><stop offset=".72" stop-color="#52a8ff" stop-opacity="1"/><stop offset=".9" stop-color="#4aa0ff" stop-opacity=".35"/><stop offset="1" stop-color="#4aa0ff" stop-opacity="0"/></linearGradient><line x1="302" y1="696.5" x2="868" y2="696.5" stroke="url(#h696)" stroke-opacity="0.4" stroke-width="1" stroke-dasharray="6 1 4 6 2 3 2 4 6 2 2 1 1 2 4 3 2 2 3 1 2 3 3 6" stroke-dashoffset="1"/><linearGradient id="h702" gradientUnits="userSpaceOnUse" x1="301" y1="0" x2="868" y2="0"><stop offset="0.125" stop-color="#4aa0ff" stop-opacity="0"/><stop offset="0.228" stop-color="#52a8ff" stop-opacity="1"/><stop offset=".72" stop-color="#52a8ff" stop-opacity="1"/><stop offset=".9" stop-color="#4aa0ff" stop-opacity=".35"/><stop offset="1" stop-color="#4aa0ff" stop-opacity="0"/></linearGradient><line x1="372" y1="702.5" x2="868" y2="702.5" stroke="url(#h702)" stroke-opacity="0.2" stroke-width="1" stroke-dasharray="1 4 1 2 6 1 6 1 4 1 2 4 2 1 2 4 2 1 1 6 1 1 3 4" stroke-dashoffset="3"/><linearGradient id="h704" gradientUnits="userSpaceOnUse" x1="301" y1="0" x2="868" y2="0"><stop offset="0.160" stop-color="#4aa0ff" stop-opacity="0"/><stop offset="0.263" stop-color="#52a8ff" stop-opacity="1"/><stop offset=".72" stop-color="#52a8ff" stop-opacity="1"/><stop offset=".9" stop-color="#4aa0ff" stop-opacity=".35"/><stop offset="1" stop-color="#4aa0ff" stop-opacity="0"/></linearGradient><line x1="392" y1="704.5" x2="868" y2="704.5" stroke="url(#h704)" stroke-opacity="0.22" stroke-width="1" stroke-dasharray="4 1 2 4 2 1 1 3 1 2 6 1 1 3 1 1 3 1 4 2 4 1 2 1" stroke-dashoffset="18"/><linearGradient id="h706" gradientUnits="userSpaceOnUse" x1="301" y1="0" x2="868" y2="0"><stop offset="0.123" stop-color="#4aa0ff" stop-opacity="0"/><stop offset="0.226" stop-color="#52a8ff" stop-opacity="1"/><stop offset=".72" stop-color="#52a8ff" stop-opacity="1"/><stop offset=".9" stop-color="#4aa0ff" stop-opacity=".35"/><stop offset="1" stop-color="#4aa0ff" stop-opacity="0"/></linearGradient><line x1="371" y1="706.5" x2="868" y2="706.5" stroke="url(#h706)" stroke-opacity="0.2" stroke-width="1" stroke-dasharray="3 1 4 2 3 1 1 2 1 2 4 3 2 2 2 4 2 1 1 4 2 1 3 4" stroke-dashoffset="16"/><linearGradient id="h708" gradientUnits="userSpaceOnUse" x1="301" y1="0" x2="868" y2="0"><stop offset="0.143" stop-color="#4aa0ff" stop-opacity="0"/><stop offset="0.245" stop-color="#52a8ff" stop-opacity="1"/><stop offset=".72" stop-color="#52a8ff" stop-opacity="1"/><stop offset=".9" stop-color="#4aa0ff" stop-opacity=".35"/><stop offset="1" stop-color="#4aa0ff" stop-opacity="0"/></linearGradient><line x1="382" y1="708.5" x2="868" y2="708.5" stroke="url(#h708)" stroke-opacity="0.25" stroke-width="1" stroke-dasharray="2 3 3 3 1 2 1 3 1 2 6 6 2 3 1 6 1 6 2 2 4 2 1 1" stroke-dashoffset="0"/><linearGradient id="h710" gradientUnits="userSpaceOnUse" x1="301" y1="0" x2="868" y2="0"><stop offset="0.134" stop-color="#4aa0ff" stop-opacity="0"/><stop offset="0.236" stop-color="#52a8ff" stop-opacity="1"/><stop offset=".72" stop-color="#52a8ff" stop-opacity="1"/><stop offset=".9" stop-color="#4aa0ff" stop-opacity=".35"/><stop offset="1" stop-color="#4aa0ff" stop-opacity="0"/></linearGradient><line x1="377" y1="710.5" x2="868" y2="710.5" stroke="url(#h710)" stroke-opacity="0.2" stroke-width="1" stroke-dasharray="4 2 1 3 4 1 1 6 1 3 3 2 1 2 2 2 2 1 6 3 1 3 4 2" stroke-dashoffset="1"/><linearGradient id="h712" gradientUnits="userSpaceOnUse" x1="301" y1="0" x2="868" y2="0"><stop offset="0.178" stop-color="#4aa0ff" stop-opacity="0"/><stop offset="0.280" stop-color="#52a8ff" stop-opacity="1"/><stop offset=".72" stop-color="#52a8ff" stop-opacity="1"/><stop offset=".9" stop-color="#4aa0ff" stop-opacity=".35"/><stop offset="1" stop-color="#4aa0ff" stop-opacity="0"/></linearGradient><line x1="402" y1="712.5" x2="868" y2="712.5" stroke="url(#h712)" stroke-opacity="0.22" stroke-width="1" stroke-dasharray="6 1 2 4 6 1 4 1 1 4 2 6 1 1 4 3 2 2 6 1 2 2 3 4" stroke-dashoffset="11"/><linearGradient id="h714" gradientUnits="userSpaceOnUse" x1="301" y1="0" x2="868" y2="0"><stop offset="0.125" stop-color="#4aa0ff" stop-opacity="0"/><stop offset="0.228" stop-color="#52a8ff" stop-opacity="1"/><stop offset=".72" stop-color="#52a8ff" stop-opacity="1"/><stop offset=".9" stop-color="#4aa0ff" stop-opacity=".35"/><stop offset="1" stop-color="#4aa0ff" stop-opacity="0"/></linearGradient><line x1="372" y1="714.5" x2="868" y2="714.5" stroke="url(#h714)" stroke-opacity="0.18" stroke-width="1" stroke-dasharray="6 2 2 1 4 6 2 4 2 6 4 2 6 2 3 1 3 3 1 4 1 2 1 1" stroke-dashoffset="1"/><linearGradient id="h719" gradientUnits="userSpaceOnUse" x1="301" y1="0" x2="868" y2="0"><stop offset="0.160" stop-color="#4aa0ff" stop-opacity="0"/><stop offset="0.263" stop-color="#52a8ff" stop-opacity="1"/><stop offset=".72" stop-color="#52a8ff" stop-opacity="1"/><stop offset=".9" stop-color="#4aa0ff" stop-opacity=".35"/><stop offset="1" stop-color="#4aa0ff" stop-opacity="0"/></linearGradient><line x1="392" y1="719.5" x2="868" y2="719.5" stroke="url(#h719)" stroke-opacity="0.15" stroke-width="1" stroke-dasharray="1 1 1 1 1 2 2 4 6 2 1 2 2 2 3 2 2 2 2 1 1 1 4 1" stroke-dashoffset="2"/><linearGradient id="h724" gradientUnits="userSpaceOnUse" x1="301" y1="0" x2="868" y2="0"><stop offset="0.178" stop-color="#4aa0ff" stop-opacity="0"/><stop offset="0.280" stop-color="#52a8ff" stop-opacity="1"/><stop offset=".72" stop-color="#52a8ff" stop-opacity="1"/><stop offset=".9" stop-color="#4aa0ff" stop-opacity=".35"/><stop offset="1" stop-color="#4aa0ff" stop-opacity="0"/></linearGradient><line x1="402" y1="724.5" x2="868" y2="724.5" stroke="url(#h724)" stroke-opacity="0.15" stroke-width="1" stroke-dasharray="2 6 2 6 2 1 3 2 1 2 6 1 6 2 4 1 1 2 1 2 6 2 2 1" stroke-dashoffset="0"/><line x1="360" y1="402.5" x2="800" y2="402.5" stroke="#4a98ff" stroke-opacity="0.1" stroke-width="1" stroke-dasharray="2 5 1 2 1 4 2 3 1 2 1 2 1 2 2 4 1 3 2 4 1 2 2 3 1 3 1 2 2 4" stroke-dashoffset="0"/><line x1="360" y1="405.5" x2="800" y2="405.5" stroke="#4a98ff" stroke-opacity="0.14" stroke-width="1" stroke-dasharray="2 2 2 5 1 2 1 7 1 2 1 3 2 2 2 2 1 2 2 5 1 2 1 5 2 4 1 2 1 3" stroke-dashoffset="16"/><line x1="360" y1="408.5" x2="800" y2="408.5" stroke="#4a98ff" stroke-opacity="0.18" stroke-width="1" stroke-dasharray="2 3 1 2 1 2 1 7 1 7 1 3 1 5 1 5 2 7 2 7 1 2 1 5 1 7 1 3 1 5" stroke-dashoffset="2"/><line x1="360" y1="411.5" x2="800" y2="411.5" stroke="#4a98ff" stroke-opacity="0.2" stroke-width="1" stroke-dasharray="1 5 1 3 1 7 1 5 1 2 2 7 1 4 1 5 1 2 1 4 1 2 1 5 1 5 1 4 1 7" stroke-dashoffset="0"/><line x1="360" y1="414.5" x2="800" y2="414.5" stroke="#4a98ff" stroke-opacity="0.2" stroke-width="1" stroke-dasharray="2 3 1 2 2 4 1 5 1 4 1 4 1 3 1 5 1 4 1 2 1 2 1 2 1 4 2 4 1 3" stroke-dashoffset="16"/><line x1="360" y1="416.5" x2="800" y2="416.5" stroke="#4a98ff" stroke-opacity="0.16" stroke-width="1" stroke-dasharray="2 3 1 3 1 4 1 3 1 2 1 7 1 3 2 5 2 2 1 4 2 3 2 7 2 3 2 2 1 7" stroke-dashoffset="15"/><rect x="308" y="289" width="1" height="241" fill="#3a78ff" fill-opacity="0.1"/><rect x="332" y="289" width="1" height="241" fill="#3a78ff" fill-opacity="0.14"/><rect x="373" y="289" width="1" height="241" fill="#3a78ff" fill-opacity="0.14"/><rect x="543" y="289" width="1" height="241" fill="#3a78ff" fill-opacity="0.14"/><rect x="641" y="289" width="1" height="241" fill="#3a78ff" fill-opacity="0.1"/><rect x="766" y="289" width="1" height="241" fill="#3a78ff" fill-opacity="0.08"/><rect x="838" y="289" width="1" height="241" fill="#3a78ff" fill-opacity="0.08"/><line x1="543.5" y1="289" x2="543.5" y2="420" stroke="#4a90ff" stroke-opacity="0.35" stroke-width="1" stroke-dasharray="1 2 2 3 1 1 1 4 2 2"/><line x1="628.5" y1="289" x2="628.5" y2="420" stroke="#4a90ff" stroke-opacity="0.3" stroke-width="1" stroke-dasharray="1 2 2 3 1 1 1 4 2 2"/><line x1="640.5" y1="289" x2="640.5" y2="420" stroke="#4a90ff" stroke-opacity="0.45" stroke-width="1" stroke-dasharray="1 2 2 3 1 1 1 4 2 2"/><rect x="456" y="289" width="1" height="238" fill="#3ca2f2" fill-opacity="0.95"/><rect x="457" y="289" width="1" height="238" fill="#1a48c8" fill-opacity="0.7"/><rect x="458" y="289" width="1" height="238" fill="#ff8c14" fill-opacity="1"/><rect x="459" y="289" width="1" height="238" fill="#2a60e0" fill-opacity="0.35"/><rect x="584" y="289" width="2" height="445" fill="#e6e63a" fill-opacity="1"/><rect x="608" y="289" width="1" height="128" fill="#ccd868" fill-opacity="1"/><rect x="608" y="417" width="1" height="110" fill="#ffac10" fill-opacity="1"/><rect x="458" y="527" width="1" height="17" fill="#58b4e8" fill-opacity="1"/><rect x="460" y="527" width="2" height="17" fill="#ffb81c" fill-opacity="1"/><rect x="461" y="544" width="2" height="4" fill="#ffb81c" fill-opacity="1"/><rect x="463" y="545" width="1" height="3" fill="#9ccf9c" fill-opacity="1"/><rect x="464" y="548" width="2" height="5" fill="#ffb81c" fill-opacity="1"/><rect x="463" y="548" width="1" height="5" fill="#58b4e8" fill-opacity="1"/><rect x="466" y="552" width="2" height="9" fill="#ffb81c" fill-opacity="1"/><rect x="465" y="553" width="1" height="8" fill="#58b4e8" fill-opacity="1"/><rect x="469" y="561" width="2" height="6" fill="#ffb81c" fill-opacity="1"/><rect x="468" y="561" width="1" height="6" fill="#58b4e8" fill-opacity="1"/><rect x="471" y="567" width="2" height="8" fill="#9ccf9c" fill-opacity="1"/><rect x="473" y="567" width="2" height="8" fill="#ffb81c" fill-opacity="1"/><rect x="474" y="576" width="1" height="14" fill="#58b4e8" fill-opacity="1"/><rect x="476" y="576" width="1" height="14" fill="#ffb81c" fill-opacity="1"/><rect x="470" y="590" width="2" height="3" fill="#ffb81c" fill-opacity="1"/><rect x="472" y="590" width="1" height="2" fill="#ffd82a" fill-opacity="1"/><rect x="467" y="592" width="1" height="10" fill="#58b4e8" fill-opacity="1"/><rect x="469" y="592" width="2" height="10" fill="#ffb81c" fill-opacity="1"/><rect x="449" y="602" width="2" height="2" fill="#ffd82a" fill-opacity="1"/><rect x="445" y="604" width="1" height="7" fill="#58b4e8" fill-opacity="1"/><rect x="446" y="604" width="2" height="7" fill="#ffb81c" fill-opacity="1"/><rect x="448" y="603" width="1" height="2" fill="#ffd82a" fill-opacity="1"/><rect x="443" y="610" width="3" height="3" fill="#ffd82a" fill-opacity="1"/><rect x="436" y="613" width="1" height="3" fill="#ffb81c" fill-opacity="1"/><rect x="431" y="616" width="2" height="7" fill="#58b4e8" fill-opacity="1"/><rect x="433" y="616" width="2" height="7" fill="#ffb81c" fill-opacity="1"/><rect x="429" y="622" width="3" height="2" fill="#ffd82a" fill-opacity="1"/><rect x="425" y="624" width="3" height="2" fill="#ffd82a" fill-opacity="1"/><rect x="409" y="626" width="4" height="2" fill="#ffd82a" fill-opacity="1"/><rect x="515" y="628" width="2" height="2" fill="#ffd82a" fill-opacity="1"/><rect x="364" y="628" width="2" height="2" fill="#ffd82a" fill-opacity="1"/><rect x="610" y="527" width="1" height="17" fill="#ffb81c" fill-opacity="1"/><rect x="612" y="544" width="2" height="3" fill="#ffd82a" fill-opacity="1"/><rect x="614" y="547" width="2" height="6" fill="#ffd82a" fill-opacity="1"/><rect x="616" y="552" width="2" height="9" fill="#ffd82a" fill-opacity="1"/><rect x="615" y="556" width="1" height="5" fill="#58b4e8" fill-opacity="1"/><rect x="619" y="561" width="2" height="2" fill="#ffd82a" fill-opacity="1"/><rect x="621" y="563" width="2" height="5" fill="#ffd82a" fill-opacity="1"/><rect x="620" y="564" width="1" height="4" fill="#58b4e8" fill-opacity="1"/><rect x="623" y="567" width="2" height="9" fill="#ffd82a" fill-opacity="1"/><rect x="625" y="576" width="2" height="14" fill="#ffd82a" fill-opacity="1"/><rect x="621" y="590" width="2" height="3" fill="#ffd82a" fill-opacity="1"/><rect x="619" y="593" width="1" height="9" fill="#ffd82a" fill-opacity="1"/><rect x="599" y="602" width="1" height="2" fill="#ffd82a" fill-opacity="1"/><rect x="597" y="604" width="1" height="7" fill="#ffd82a" fill-opacity="1"/><rect x="596" y="604" width="1" height="7" fill="#58b4e8" fill-opacity="1"/><rect x="594" y="611" width="2" height="2" fill="#ffd82a" fill-opacity="1"/><rect x="586" y="613" width="1" height="3" fill="#ffd82a" fill-opacity="1"/><rect x="583" y="616" width="1" height="6" fill="#ffd82a" fill-opacity="1"/><rect x="581" y="622" width="2" height="2" fill="#ffd82a" fill-opacity="1"/><rect x="577" y="624" width="2" height="2" fill="#ffd82a" fill-opacity="1"/><rect x="561" y="626" width="3" height="2" fill="#ffd82a" fill-opacity="1"/><rect x="523" y="575" width="1" height="1" fill="#c8d060" fill-opacity="0.8"/><rect x="532" y="575" width="1" height="1" fill="#70b8e0" fill-opacity="0.8"/><rect x="541" y="575" width="1" height="1" fill="#c8d060" fill-opacity="0.8"/><rect x="559" y="575" width="1" height="1" fill="#c8d060" fill-opacity="0.8"/><rect x="568" y="575" width="1" height="1" fill="#70b8e0" fill-opacity="0.8"/><rect x="577" y="575" width="1" height="1" fill="#c8d060" fill-opacity="0.8"/><rect x="586" y="575" width="1" height="1" fill="#70b8e0" fill-opacity="0.8"/><rect x="604" y="575" width="1" height="1" fill="#70b8e0" fill-opacity="0.8"/><rect x="613" y="575" width="1" height="1" fill="#c8d060" fill-opacity="0.8"/><rect x="474" y="632" width="1" height="102" fill="#ead83a" fill-opacity="1"/><rect x="475" y="630" width="1" height="3" fill="#ead83a" fill-opacity="1"/><rect x="475" y="633" width="1" height="101" fill="#ead83a" fill-opacity="0.45"/><rect x="324" y="631" width="1" height="103" fill="#52acf2" fill-opacity="1"/><rect x="325" y="630" width="1" height="3" fill="#52acf2" fill-opacity="0.9"/><rect x="325" y="633" width="1" height="101" fill="#4aa8f0" fill-opacity="0.3"/></svg>
<div style="left:878px;top:305px;width:10px;height:414px;background:linear-gradient(180deg,#560404 0%,#7c0202 12%,#a80000 23%,#d40000 29%,#ff0000 33%,#ff3a08 40%,#ff9a10 46%,#ffe800 51.5%,#d8d830 53.5%,#8cc078 57%,#2890f0 61.5%,#0a4ccc 66%,#00089a 70.5%,#000078 76%,#000048 85%,#00001c 94%,#000008 100%)"></div>
<div class="t" style="left:912px;top:74px;">Zoom</div>
<div style="left:924px;top:97px;width:4px;height:167px;background:#e7eaea;border:1px solid #d6d6d6"></div>
<div style="left:910px;top:102px;width:4px;height:1px;background:#c4c4c4"></div>
<div style="left:938px;top:102px;width:4px;height:1px;background:#c4c4c4"></div>
<div style="left:910px;top:118px;width:4px;height:1px;background:#c4c4c4"></div>
<div style="left:938px;top:118px;width:4px;height:1px;background:#c4c4c4"></div>
<div style="left:910px;top:134px;width:4px;height:1px;background:#c4c4c4"></div>
<div style="left:938px;top:134px;width:4px;height:1px;background:#c4c4c4"></div>
<div style="left:910px;top:149px;width:4px;height:1px;background:#c4c4c4"></div>
<div style="left:938px;top:149px;width:4px;height:1px;background:#c4c4c4"></div>
<div style="left:910px;top:165px;width:4px;height:1px;background:#c4c4c4"></div>
<div style="left:938px;top:165px;width:4px;height:1px;background:#c4c4c4"></div>
<div style="left:910px;top:181px;width:4px;height:1px;background:#c4c4c4"></div>
<div style="left:938px;top:181px;width:4px;height:1px;background:#c4c4c4"></div>
<div style="left:910px;top:196px;width:4px;height:1px;background:#c4c4c4"></div>
<div style="left:938px;top:196px;width:4px;height:1px;background:#c4c4c4"></div>
<div style="left:910px;top:212px;width:4px;height:1px;background:#c4c4c4"></div>
<div style="left:938px;top:212px;width:4px;height:1px;background:#c4c4c4"></div>
<div style="left:910px;top:228px;width:4px;height:1px;background:#c4c4c4"></div>
<div style="left:938px;top:228px;width:4px;height:1px;background:#c4c4c4"></div>
<div style="left:910px;top:243px;width:4px;height:1px;background:#c4c4c4"></div>
<div style="left:938px;top:243px;width:4px;height:1px;background:#c4c4c4"></div>
<div style="left:910px;top:259px;width:4px;height:1px;background:#c4c4c4"></div>
<div style="left:938px;top:259px;width:4px;height:1px;background:#c4c4c4"></div>
<div style="left:915px;top:254px;width:21px;height:10px;background:#e8e8e8;border:1px solid #969696"></div>
<div class="t" style="left:906px;top:278px;">Contrast</div>
<div style="left:924px;top:301px;width:4px;height:168px;background:#e7eaea;border:1px solid #d6d6d6"></div>
<div style="left:910px;top:306px;width:4px;height:1px;background:#c4c4c4"></div>
<div style="left:938px;top:306px;width:4px;height:1px;background:#c4c4c4"></div>
<div style="left:910px;top:326px;width:4px;height:1px;background:#c4c4c4"></div>
<div style="left:938px;top:326px;width:4px;height:1px;background:#c4c4c4"></div>
<div style="left:910px;top:345px;width:4px;height:1px;background:#c4c4c4"></div>
<div style="left:938px;top:345px;width:4px;height:1px;background:#c4c4c4"></div>
<div style="left:910px;top:365px;width:4px;height:1px;background:#c4c4c4"></div>
<div style="left:938px;top:365px;width:4px;height:1px;background:#c4c4c4"></div>
<div style="left:910px;top:385px;width:4px;height:1px;background:#c4c4c4"></div>
<div style="left:938px;top:385px;width:4px;height:1px;background:#c4c4c4"></div>
<div style="left:910px;top:404px;width:4px;height:1px;background:#c4c4c4"></div>
<div style="left:938px;top:404px;width:4px;height:1px;background:#c4c4c4"></div>
<div style="left:910px;top:424px;width:4px;height:1px;background:#c4c4c4"></div>
<div style="left:938px;top:424px;width:4px;height:1px;background:#c4c4c4"></div>
<div style="left:910px;top:443px;width:4px;height:1px;background:#c4c4c4"></div>
<div style="left:938px;top:443px;width:4px;height:1px;background:#c4c4c4"></div>
<div style="left:910px;top:463px;width:4px;height:1px;background:#c4c4c4"></div>
<div style="left:938px;top:463px;width:4px;height:1px;background:#c4c4c4"></div>
<div style="left:915px;top:455px;width:21px;height:10px;background:#e8e8e8;border:1px solid #969696"></div>
<div class="t" style="left:911px;top:481px;">Speed</div>
<div style="left:924px;top:504px;width:4px;height:168px;background:#e7eaea;border:1px solid #d6d6d6"></div>
<div style="left:910px;top:509px;width:4px;height:1px;background:#c4c4c4"></div>
<div style="left:938px;top:509px;width:4px;height:1px;background:#c4c4c4"></div>
<div style="left:910px;top:525px;width:4px;height:1px;background:#c4c4c4"></div>
<div style="left:938px;top:525px;width:4px;height:1px;background:#c4c4c4"></div>
<div style="left:910px;top:541px;width:4px;height:1px;background:#c4c4c4"></div>
<div style="left:938px;top:541px;width:4px;height:1px;background:#c4c4c4"></div>
<div style="left:910px;top:557px;width:4px;height:1px;background:#c4c4c4"></div>
<div style="left:938px;top:557px;width:4px;height:1px;background:#c4c4c4"></div>
<div style="left:910px;top:572px;width:4px;height:1px;background:#c4c4c4"></div>
<div style="left:938px;top:572px;width:4px;height:1px;background:#c4c4c4"></div>
<div style="left:910px;top:588px;width:4px;height:1px;background:#c4c4c4"></div>
<div style="left:938px;top:588px;width:4px;height:1px;background:#c4c4c4"></div>
<div style="left:910px;top:604px;width:4px;height:1px;background:#c4c4c4"></div>
<div style="left:938px;top:604px;width:4px;height:1px;background:#c4c4c4"></div>
<div style="left:910px;top:620px;width:4px;height:1px;background:#c4c4c4"></div>
<div style="left:938px;top:620px;width:4px;height:1px;background:#c4c4c4"></div>
<div style="left:910px;top:636px;width:4px;height:1px;background:#c4c4c4"></div>
<div style="left:938px;top:636px;width:4px;height:1px;background:#c4c4c4"></div>
<div style="left:910px;top:652px;width:4px;height:1px;background:#c4c4c4"></div>
<div style="left:938px;top:652px;width:4px;height:1px;background:#c4c4c4"></div>
<div style="left:910px;top:666px;width:4px;height:1px;background:#c4c4c4"></div>
<div style="left:938px;top:666px;width:4px;height:1px;background:#c4c4c4"></div>
<div style="left:915px;top:599px;width:21px;height:10px;background:#e8e8e8;border:1px solid #969696"></div>
<div class="t" style="left:1160px;top:685px;width:201px;text-align:right;font-size:15px;line-height:18px;height:18px;color:#fff;opacity:.93;letter-spacing:-0.2px">Windows 8 Pro</div>
<div class="t" style="left:1160px;top:708px;width:201px;text-align:right;font-size:15px;line-height:18px;height:18px;color:#fff;opacity:.93;letter-spacing:-0.2px">Build 9200</div>
<div style="left:0px;top:728px;width:1366px;height:40px;background:rgba(80,127,188,.77);border-top:1px solid rgba(50,95,155,.5)"></div>
<div style="left:138px;top:728px;width:60px;height:40px;background:rgba(255,255,255,.20);border:1px solid rgba(40,80,140,.55);border-bottom:0"></div>
<div style="left:139px;top:729px;width:58px;height:39px;border:1px solid rgba(255,255,255,.35);border-bottom:0"></div>
<div style="left:200px;top:728px;width:60px;height:40px;background:rgba(250,250,252,.42);border:1px solid rgba(30,70,130,.7);border-bottom:0"></div>
<div style="left:201px;top:729px;width:58px;height:39px;border:1px solid rgba(255,255,255,.85);border-bottom:0"></div>
<svg style="left:27px;top:734px" width="28" height="28" viewBox="0 0 28 28"><defs><clipPath id="bc"><circle cx="14" cy="14" r="14"/></clipPath><linearGradient id="b1" x1="0" y1="0" x2="0" y2="1"><stop offset="0" stop-color="#f0524a"/><stop offset="1" stop-color="#dc3428"/></linearGradient><linearGradient id="b2" x1="0" y1="0" x2="0" y2="1"><stop offset="0" stop-color="#f8c838"/><stop offset="1" stop-color="#f0a616"/></linearGradient><linearGradient id="b3" x1="0" y1="0" x2="0" y2="1"><stop offset="0" stop-color="#84c634"/><stop offset=".5" stop-color="#2e9a22"/><stop offset="1" stop-color="#1a7e1a"/></linearGradient><linearGradient id="b4" x1="0" y1="0" x2="0" y2="1"><stop offset="0" stop-color="#5cacf2"/><stop offset="1" stop-color="#2872cc"/></linearGradient><radialGradient id="bs" cx=".5" cy=".4" r=".62"><stop offset="0" stop-color="#fff" stop-opacity=".04"/><stop offset=".78" stop-color="#fff" stop-opacity="0"/><stop offset="1" stop-color="#001040" stop-opacity=".2"/></radialGradient></defs><g clip-path="url(#bc)"><rect width="28" height="28" fill="url(#b1)"/><path d="M14.2 -1 C11 4 8.8 10 8.6 15.5 L16.3 15.8 C19 12 23 10 29 9.3 L29 -1 Z" fill="url(#b2)"/><path d="M29 9.3 C23 10 19 12.5 16.3 15.8 C18.5 19 19.2 23 18.3 29 L29 29 Z" fill="url(#b3)"/><path d="M-1 24 L2 22.5 C3 17.5 7 15 11 15 C15 15 18 17.5 18.8 21.5 C19.2 24 19 27 18.3 29 L-1 29 Z" fill="url(#b4)"/><rect width="28" height="28" fill="url(#bs)"/></g></svg>
<svg style="left:91px;top:732px" width="31" height="30" viewBox="0 0 31 30"><defs><radialGradient id="ieg" cx=".45" cy=".5" r=".6"><stop offset="0" stop-color="#b0f2ff"/><stop offset=".55" stop-color="#46c4f6"/><stop offset="1" stop-color="#1888dc"/></radialGradient></defs><path d="M16 4 C8.5 4 3.5 9.5 3.5 17 C3.5 24 8.5 29 16 29 C21.5 29 26 26 27.7 21 L21 21 C20 23 18.3 24 16 24 C12.6 24 10.4 21.8 10.2 18.6 L28.3 18.6 C29 10 24 4 16 4 Z M10.4 14 C11 11 13 9.3 16 9.3 C19 9.3 21 11 21.4 14 Z" fill="url(#ieg)"/><path d="M28.5 1.5 C25 -1.5 13 3 5 14 C0 21 -0.5 27 2.5 28.8 C4 29.6 6 29 7.5 28 C4 28.6 2.6 25.5 6.5 18.5 C12 9 23 2.5 27 4.2 C28.6 5 28.4 7 27.6 8.6 C29.6 6 30.2 3 28.5 1.5 Z" fill="#f6c21c"/></svg>
<svg style="left:152px;top:735px" width="33" height="29" viewBox="0 0 33 29"><defs><linearGradient id="fg" x1="0" y1="0" x2="0" y2="1"><stop offset="0" stop-color="#fdf2b8"/><stop offset="1" stop-color="#f0cf6c"/></linearGradient><linearGradient id="fb" x1="0" y1="0" x2="0" y2="1"><stop offset="0" stop-color="#b8ecff"/><stop offset="1" stop-color="#2a9ee6"/></linearGradient></defs><path d="M1.5 1 H15 L17 3 H29.5 L31.5 5 V27 H0.5 V2 Z" fill="#e9c763" stroke="#d0a840" stroke-width=".8"/><rect x="4" y="1.6" width="8" height="2.4" fill="#fff"/><rect x="4" y="1.6" width="3" height="2.4" fill="#18b030"/><rect x="12" y="3.6" width="9" height="2.4" fill="#fff"/><rect x="12" y="3.6" width="3" height="2.4" fill="#e03020"/><rect x="20" y="5.6" width="9" height="2.4" fill="#fff"/><rect x="20" y="5.6" width="3" height="2.4" fill="#1890f0"/><path d="M1 8 H18 L19.5 9.5 H32 V27.5 H1 Z" fill="url(#fg)" stroke="#dcb850" stroke-width=".8"/><path d="M4.5 28 V19 Q4.5 16.5 7 16.5 H25 Q27.5 16.5 27.5 19 V28 H22.5 V22 H9.5 V28 Z" fill="url(#fb)" stroke="#38a8ee" stroke-width=".9"/><circle cx="8" cy="18.5" r="2.4" fill="#fff" fill-opacity=".9"/></svg>
<svg style="left:220px;top:732px" width="22" height="31" viewBox="0 0 22 31"><path d="M1 7 C1 2 5 0.5 9 1 C14 1.6 19 5 20.5 9.5 C21 12 19 14.5 15 14.5 L7 14.5 C3 14.5 1 12 1 7 Z" fill="#f2f5fb"/><path d="M8.5 4.5 C10 3 13.5 4 15.5 6.5 C16.3 7.8 15 8.6 13.5 8 C11.5 7 9.5 6.6 8.5 4.5 Z" fill="#4e8ae6"/><path d="M1.2 9 C4 7.5 9 9 13 11 C16 12.3 19 12 20.6 10 C21 13 18.5 15.5 14.5 15.5 L5.5 15.5 C2.5 15.5 1.2 13 1.2 9 Z" fill="#3b78e2"/><rect x="5.2" y="15.5" width="1.4" height="15" fill="#a4a8ae"/><rect x="8.2" y="15.5" width="1.4" height="15" fill="#b4b8be"/><path d="M4.4 23.5 H7.3 V30.6 H4.4 Z M7.6 23.5 H10.4 V30.6 H7.6 Z" fill="#9ea2a8" fill-opacity=".75"/></svg>
<svg style="left:1179px;top:746px" width="10" height="6" viewBox="0 0 10 6"><path d="M0 6 L5 0.6 L10 6 Z" fill="#fff"/></svg>
<svg style="left:1200px;top:741px" width="16" height="16" viewBox="0 0 16 16"><path d="M2 0.5 V4 M5 0.5 V4" stroke="#fff" stroke-width="1.3"/><path d="M0.5 4 H6.5 V7.5 H4.3 V15.5 H2.7 V7.5 H0.5 Z" fill="#fff"/><rect x="8.2" y="2.2" width="6.6" height="12.6" rx="1" fill="none" stroke="#fff" stroke-width="1.4"/><rect x="10" y="0.6" width="3" height="1.6" fill="#fff"/><rect x="9.8" y="4" width="3.4" height="9" fill="#fff"/></svg>
<svg style="left:1224px;top:743px" width="16" height="12" viewBox="0 0 16 12"><rect x="0.5" y="9.5" width="2" height="2.5" fill="#fff"/><rect x="3.5" y="7.5" width="2.2" height="4.5" fill="#fff"/><rect x="6.6" y="5.2" width="2.3" height="6.8" fill="#fff"/><rect x="9.8" y="2.8" width="2.3" height="9.2" fill="#fff"/><rect x="13" y="0.4" width="2.6" height="11.6" fill="#6a6a6a"/></svg>
<svg style="left:1250px;top:741px" width="14" height="16" viewBox="0 0 14 16"><path d="M0.8 5 H3.5 L7.5 0.8 V15.2 L3.5 11 H0.8 Z" fill="none" stroke="#fff" stroke-width="1.2"/><path d="M1.5 5.6 H3.8 L6.8 2.4 V13.6 L3.8 10.4 H1.5 Z" fill="#fff" fill-opacity=".85"/><path d="M10 5 Q12.2 8 10 11" stroke="#fff" stroke-width="1.2" fill="none"/></svg>
<div class="t" style="left:1261px;top:734px;width:100px;text-align:center;font-size:11.5px;line-height:14px;height:14px;color:#fff;letter-spacing:-0.05px">15:40</div>
<div class="t" style="left:1261px;top:751px;width:100px;text-align:center;font-size:11.5px;line-height:14px;height:14px;color:#fff;letter-spacing:-0.05px">2013-08-18</div>
</body></html>
